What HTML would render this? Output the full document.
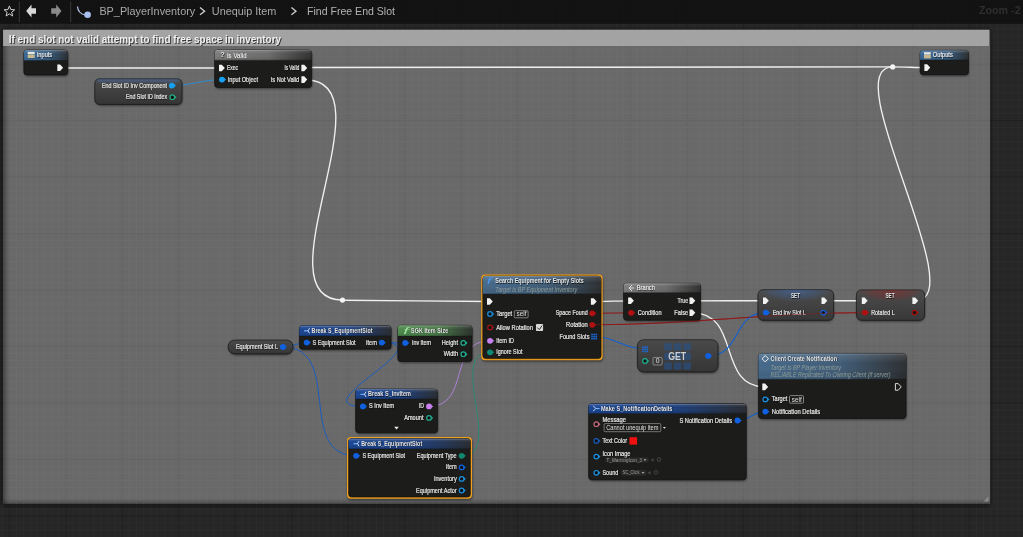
<!DOCTYPE html><html><head><meta charset="utf-8"><style>html,body{margin:0;padding:0;background:#262626;overflow:hidden;width:1023px;height:537px}svg{display:block;font-family:"Liberation Sans",sans-serif}</style></head><body>
<svg width="1023" height="537" viewBox="0 0 1023 537"><g opacity="0.999">
<defs>
<filter id="blur1" x="-20%" y="-20%" width="140%" height="140%"><feGaussianBlur stdDeviation="1.2"/></filter>
<linearGradient id="gloss" x1="0" y1="0" x2="0" y2="1"><stop offset="0" stop-color="#fff" stop-opacity="0.14"/><stop offset="0.4" stop-color="#fff" stop-opacity="0.0"/><stop offset="0.8" stop-color="#000" stop-opacity="0.06"/><stop offset="1" stop-color="#000" stop-opacity="0.02"/></linearGradient>
<linearGradient id="vargrad" x1="0" y1="0" x2="0" y2="1"><stop offset="0" stop-color="#4a4a4a"/><stop offset="1" stop-color="#353535"/></linearGradient>
<linearGradient id="cshade" x1="0" y1="0" x2="1" y2="0"><stop offset="0" stop-color="#000" stop-opacity="0.25"/><stop offset="0.02" stop-color="#000" stop-opacity="0"/></linearGradient>
<radialGradient id="glowb"><stop offset="0" stop-color="#3a72c8" stop-opacity="0.45"/><stop offset="0.65" stop-color="#3a72c8" stop-opacity="0.2"/><stop offset="1" stop-color="#3a72c8" stop-opacity="0"/></radialGradient>
<radialGradient id="glowr"><stop offset="0" stop-color="#a01c1c" stop-opacity="0.45"/><stop offset="0.65" stop-color="#a01c1c" stop-opacity="0.2"/><stop offset="1" stop-color="#a01c1c" stop-opacity="0"/></radialGradient>
<linearGradient id="setgrad" x1="0" y1="0" x2="0" y2="1"><stop offset="0" stop-color="#4c4c4c"/><stop offset="1" stop-color="#383838"/></linearGradient>
<filter id="blur2" x="-5%" y="-5%" width="110%" height="110%"><feGaussianBlur stdDeviation="1.6"/></filter>
<linearGradient id="cshadeL" x1="0" y1="0" x2="1" y2="0"><stop offset="0" stop-color="#000" stop-opacity="0.35"/><stop offset="1" stop-color="#000" stop-opacity="0"/></linearGradient>
<linearGradient id="cshadeR" x1="1" y1="0" x2="0" y2="0"><stop offset="0" stop-color="#000" stop-opacity="0.15"/><stop offset="1" stop-color="#000" stop-opacity="0"/></linearGradient>
<linearGradient id="cshadeB" x1="0" y1="1" x2="0" y2="0"><stop offset="0" stop-color="#000" stop-opacity="0.3"/><stop offset="1" stop-color="#000" stop-opacity="0"/></linearGradient>
</defs>
<rect width="1023" height="537" fill="#262626"/>
<rect x="1.74" y="0.0" width="1" height="537.0" fill="#2c2c2c"/>
<rect x="8.80" y="0.0" width="1" height="537.0" fill="#202020"/>
<rect x="15.86" y="0.0" width="1" height="537.0" fill="#2c2c2c"/>
<rect x="22.92" y="0.0" width="1" height="537.0" fill="#2c2c2c"/>
<rect x="29.98" y="0.0" width="1" height="537.0" fill="#2c2c2c"/>
<rect x="37.03" y="0.0" width="1" height="537.0" fill="#2c2c2c"/>
<rect x="44.09" y="0.0" width="1" height="537.0" fill="#2c2c2c"/>
<rect x="51.15" y="0.0" width="1" height="537.0" fill="#2c2c2c"/>
<rect x="58.21" y="0.0" width="1" height="537.0" fill="#2c2c2c"/>
<rect x="65.27" y="0.0" width="1" height="537.0" fill="#202020"/>
<rect x="72.33" y="0.0" width="1" height="537.0" fill="#2c2c2c"/>
<rect x="79.39" y="0.0" width="1" height="537.0" fill="#2c2c2c"/>
<rect x="86.45" y="0.0" width="1" height="537.0" fill="#2c2c2c"/>
<rect x="93.50" y="0.0" width="1" height="537.0" fill="#2c2c2c"/>
<rect x="100.56" y="0.0" width="1" height="537.0" fill="#2c2c2c"/>
<rect x="107.62" y="0.0" width="1" height="537.0" fill="#2c2c2c"/>
<rect x="114.68" y="0.0" width="1" height="537.0" fill="#2c2c2c"/>
<rect x="121.74" y="0.0" width="1" height="537.0" fill="#202020"/>
<rect x="128.80" y="0.0" width="1" height="537.0" fill="#2c2c2c"/>
<rect x="135.86" y="0.0" width="1" height="537.0" fill="#2c2c2c"/>
<rect x="142.92" y="0.0" width="1" height="537.0" fill="#2c2c2c"/>
<rect x="149.98" y="0.0" width="1" height="537.0" fill="#2c2c2c"/>
<rect x="157.03" y="0.0" width="1" height="537.0" fill="#2c2c2c"/>
<rect x="164.09" y="0.0" width="1" height="537.0" fill="#2c2c2c"/>
<rect x="171.15" y="0.0" width="1" height="537.0" fill="#2c2c2c"/>
<rect x="178.21" y="0.0" width="1" height="537.0" fill="#202020"/>
<rect x="185.27" y="0.0" width="1" height="537.0" fill="#2c2c2c"/>
<rect x="192.33" y="0.0" width="1" height="537.0" fill="#2c2c2c"/>
<rect x="199.39" y="0.0" width="1" height="537.0" fill="#2c2c2c"/>
<rect x="206.44" y="0.0" width="1" height="537.0" fill="#2c2c2c"/>
<rect x="213.50" y="0.0" width="1" height="537.0" fill="#2c2c2c"/>
<rect x="220.56" y="0.0" width="1" height="537.0" fill="#2c2c2c"/>
<rect x="227.62" y="0.0" width="1" height="537.0" fill="#2c2c2c"/>
<rect x="234.68" y="0.0" width="1" height="537.0" fill="#202020"/>
<rect x="241.74" y="0.0" width="1" height="537.0" fill="#2c2c2c"/>
<rect x="248.80" y="0.0" width="1" height="537.0" fill="#2c2c2c"/>
<rect x="255.86" y="0.0" width="1" height="537.0" fill="#2c2c2c"/>
<rect x="262.92" y="0.0" width="1" height="537.0" fill="#2c2c2c"/>
<rect x="269.97" y="0.0" width="1" height="537.0" fill="#2c2c2c"/>
<rect x="277.03" y="0.0" width="1" height="537.0" fill="#2c2c2c"/>
<rect x="284.09" y="0.0" width="1" height="537.0" fill="#2c2c2c"/>
<rect x="291.15" y="0.0" width="1" height="537.0" fill="#202020"/>
<rect x="298.21" y="0.0" width="1" height="537.0" fill="#2c2c2c"/>
<rect x="305.27" y="0.0" width="1" height="537.0" fill="#2c2c2c"/>
<rect x="312.33" y="0.0" width="1" height="537.0" fill="#2c2c2c"/>
<rect x="319.38" y="0.0" width="1" height="537.0" fill="#2c2c2c"/>
<rect x="326.44" y="0.0" width="1" height="537.0" fill="#2c2c2c"/>
<rect x="333.50" y="0.0" width="1" height="537.0" fill="#2c2c2c"/>
<rect x="340.56" y="0.0" width="1" height="537.0" fill="#2c2c2c"/>
<rect x="347.62" y="0.0" width="1" height="537.0" fill="#202020"/>
<rect x="354.68" y="0.0" width="1" height="537.0" fill="#2c2c2c"/>
<rect x="361.74" y="0.0" width="1" height="537.0" fill="#2c2c2c"/>
<rect x="368.80" y="0.0" width="1" height="537.0" fill="#2c2c2c"/>
<rect x="375.86" y="0.0" width="1" height="537.0" fill="#2c2c2c"/>
<rect x="382.91" y="0.0" width="1" height="537.0" fill="#2c2c2c"/>
<rect x="389.97" y="0.0" width="1" height="537.0" fill="#2c2c2c"/>
<rect x="397.03" y="0.0" width="1" height="537.0" fill="#2c2c2c"/>
<rect x="404.09" y="0.0" width="1" height="537.0" fill="#202020"/>
<rect x="411.15" y="0.0" width="1" height="537.0" fill="#2c2c2c"/>
<rect x="418.21" y="0.0" width="1" height="537.0" fill="#2c2c2c"/>
<rect x="425.27" y="0.0" width="1" height="537.0" fill="#2c2c2c"/>
<rect x="432.32" y="0.0" width="1" height="537.0" fill="#2c2c2c"/>
<rect x="439.38" y="0.0" width="1" height="537.0" fill="#2c2c2c"/>
<rect x="446.44" y="0.0" width="1" height="537.0" fill="#2c2c2c"/>
<rect x="453.50" y="0.0" width="1" height="537.0" fill="#2c2c2c"/>
<rect x="460.56" y="0.0" width="1" height="537.0" fill="#202020"/>
<rect x="467.62" y="0.0" width="1" height="537.0" fill="#2c2c2c"/>
<rect x="474.68" y="0.0" width="1" height="537.0" fill="#2c2c2c"/>
<rect x="481.74" y="0.0" width="1" height="537.0" fill="#2c2c2c"/>
<rect x="488.80" y="0.0" width="1" height="537.0" fill="#2c2c2c"/>
<rect x="495.85" y="0.0" width="1" height="537.0" fill="#2c2c2c"/>
<rect x="502.91" y="0.0" width="1" height="537.0" fill="#2c2c2c"/>
<rect x="509.97" y="0.0" width="1" height="537.0" fill="#2c2c2c"/>
<rect x="517.03" y="0.0" width="1" height="537.0" fill="#202020"/>
<rect x="524.09" y="0.0" width="1" height="537.0" fill="#2c2c2c"/>
<rect x="531.15" y="0.0" width="1" height="537.0" fill="#2c2c2c"/>
<rect x="538.21" y="0.0" width="1" height="537.0" fill="#2c2c2c"/>
<rect x="545.26" y="0.0" width="1" height="537.0" fill="#2c2c2c"/>
<rect x="552.32" y="0.0" width="1" height="537.0" fill="#2c2c2c"/>
<rect x="559.38" y="0.0" width="1" height="537.0" fill="#2c2c2c"/>
<rect x="566.44" y="0.0" width="1" height="537.0" fill="#2c2c2c"/>
<rect x="573.50" y="0.0" width="1" height="537.0" fill="#202020"/>
<rect x="580.56" y="0.0" width="1" height="537.0" fill="#2c2c2c"/>
<rect x="587.62" y="0.0" width="1" height="537.0" fill="#2c2c2c"/>
<rect x="594.68" y="0.0" width="1" height="537.0" fill="#2c2c2c"/>
<rect x="601.73" y="0.0" width="1" height="537.0" fill="#2c2c2c"/>
<rect x="608.79" y="0.0" width="1" height="537.0" fill="#2c2c2c"/>
<rect x="615.85" y="0.0" width="1" height="537.0" fill="#2c2c2c"/>
<rect x="622.91" y="0.0" width="1" height="537.0" fill="#2c2c2c"/>
<rect x="629.97" y="0.0" width="1" height="537.0" fill="#202020"/>
<rect x="637.03" y="0.0" width="1" height="537.0" fill="#2c2c2c"/>
<rect x="644.09" y="0.0" width="1" height="537.0" fill="#2c2c2c"/>
<rect x="651.15" y="0.0" width="1" height="537.0" fill="#2c2c2c"/>
<rect x="658.20" y="0.0" width="1" height="537.0" fill="#2c2c2c"/>
<rect x="665.26" y="0.0" width="1" height="537.0" fill="#2c2c2c"/>
<rect x="672.32" y="0.0" width="1" height="537.0" fill="#2c2c2c"/>
<rect x="679.38" y="0.0" width="1" height="537.0" fill="#2c2c2c"/>
<rect x="686.44" y="0.0" width="1" height="537.0" fill="#202020"/>
<rect x="693.50" y="0.0" width="1" height="537.0" fill="#2c2c2c"/>
<rect x="700.56" y="0.0" width="1" height="537.0" fill="#2c2c2c"/>
<rect x="707.62" y="0.0" width="1" height="537.0" fill="#2c2c2c"/>
<rect x="714.67" y="0.0" width="1" height="537.0" fill="#2c2c2c"/>
<rect x="721.73" y="0.0" width="1" height="537.0" fill="#2c2c2c"/>
<rect x="728.79" y="0.0" width="1" height="537.0" fill="#2c2c2c"/>
<rect x="735.85" y="0.0" width="1" height="537.0" fill="#2c2c2c"/>
<rect x="742.91" y="0.0" width="1" height="537.0" fill="#202020"/>
<rect x="749.97" y="0.0" width="1" height="537.0" fill="#2c2c2c"/>
<rect x="757.03" y="0.0" width="1" height="537.0" fill="#2c2c2c"/>
<rect x="764.09" y="0.0" width="1" height="537.0" fill="#2c2c2c"/>
<rect x="771.14" y="0.0" width="1" height="537.0" fill="#2c2c2c"/>
<rect x="778.20" y="0.0" width="1" height="537.0" fill="#2c2c2c"/>
<rect x="785.26" y="0.0" width="1" height="537.0" fill="#2c2c2c"/>
<rect x="792.32" y="0.0" width="1" height="537.0" fill="#2c2c2c"/>
<rect x="799.38" y="0.0" width="1" height="537.0" fill="#202020"/>
<rect x="806.44" y="0.0" width="1" height="537.0" fill="#2c2c2c"/>
<rect x="813.50" y="0.0" width="1" height="537.0" fill="#2c2c2c"/>
<rect x="820.56" y="0.0" width="1" height="537.0" fill="#2c2c2c"/>
<rect x="827.61" y="0.0" width="1" height="537.0" fill="#2c2c2c"/>
<rect x="834.67" y="0.0" width="1" height="537.0" fill="#2c2c2c"/>
<rect x="841.73" y="0.0" width="1" height="537.0" fill="#2c2c2c"/>
<rect x="848.79" y="0.0" width="1" height="537.0" fill="#2c2c2c"/>
<rect x="855.85" y="0.0" width="1" height="537.0" fill="#202020"/>
<rect x="862.91" y="0.0" width="1" height="537.0" fill="#2c2c2c"/>
<rect x="869.97" y="0.0" width="1" height="537.0" fill="#2c2c2c"/>
<rect x="877.03" y="0.0" width="1" height="537.0" fill="#2c2c2c"/>
<rect x="884.08" y="0.0" width="1" height="537.0" fill="#2c2c2c"/>
<rect x="891.14" y="0.0" width="1" height="537.0" fill="#2c2c2c"/>
<rect x="898.20" y="0.0" width="1" height="537.0" fill="#2c2c2c"/>
<rect x="905.26" y="0.0" width="1" height="537.0" fill="#2c2c2c"/>
<rect x="912.32" y="0.0" width="1" height="537.0" fill="#202020"/>
<rect x="919.38" y="0.0" width="1" height="537.0" fill="#2c2c2c"/>
<rect x="926.44" y="0.0" width="1" height="537.0" fill="#2c2c2c"/>
<rect x="933.50" y="0.0" width="1" height="537.0" fill="#2c2c2c"/>
<rect x="940.55" y="0.0" width="1" height="537.0" fill="#2c2c2c"/>
<rect x="947.61" y="0.0" width="1" height="537.0" fill="#2c2c2c"/>
<rect x="954.67" y="0.0" width="1" height="537.0" fill="#2c2c2c"/>
<rect x="961.73" y="0.0" width="1" height="537.0" fill="#2c2c2c"/>
<rect x="968.79" y="0.0" width="1" height="537.0" fill="#202020"/>
<rect x="975.85" y="0.0" width="1" height="537.0" fill="#2c2c2c"/>
<rect x="982.91" y="0.0" width="1" height="537.0" fill="#2c2c2c"/>
<rect x="989.97" y="0.0" width="1" height="537.0" fill="#2c2c2c"/>
<rect x="997.02" y="0.0" width="1" height="537.0" fill="#2c2c2c"/>
<rect x="1004.08" y="0.0" width="1" height="537.0" fill="#2c2c2c"/>
<rect x="1011.14" y="0.0" width="1" height="537.0" fill="#2c2c2c"/>
<rect x="1018.20" y="0.0" width="1" height="537.0" fill="#2c2c2c"/>
<rect x="0.0" y="0.07" width="1023.0" height="1" fill="#2c2c2c"/>
<rect x="0.0" y="7.13" width="1023.0" height="1" fill="#202020"/>
<rect x="0.0" y="14.19" width="1023.0" height="1" fill="#2c2c2c"/>
<rect x="0.0" y="21.25" width="1023.0" height="1" fill="#2c2c2c"/>
<rect x="0.0" y="28.31" width="1023.0" height="1" fill="#2c2c2c"/>
<rect x="0.0" y="35.36" width="1023.0" height="1" fill="#2c2c2c"/>
<rect x="0.0" y="42.42" width="1023.0" height="1" fill="#2c2c2c"/>
<rect x="0.0" y="49.48" width="1023.0" height="1" fill="#2c2c2c"/>
<rect x="0.0" y="56.54" width="1023.0" height="1" fill="#2c2c2c"/>
<rect x="0.0" y="63.60" width="1023.0" height="1" fill="#202020"/>
<rect x="0.0" y="70.66" width="1023.0" height="1" fill="#2c2c2c"/>
<rect x="0.0" y="77.72" width="1023.0" height="1" fill="#2c2c2c"/>
<rect x="0.0" y="84.78" width="1023.0" height="1" fill="#2c2c2c"/>
<rect x="0.0" y="91.83" width="1023.0" height="1" fill="#2c2c2c"/>
<rect x="0.0" y="98.89" width="1023.0" height="1" fill="#2c2c2c"/>
<rect x="0.0" y="105.95" width="1023.0" height="1" fill="#2c2c2c"/>
<rect x="0.0" y="113.01" width="1023.0" height="1" fill="#2c2c2c"/>
<rect x="0.0" y="120.07" width="1023.0" height="1" fill="#202020"/>
<rect x="0.0" y="127.13" width="1023.0" height="1" fill="#2c2c2c"/>
<rect x="0.0" y="134.19" width="1023.0" height="1" fill="#2c2c2c"/>
<rect x="0.0" y="141.25" width="1023.0" height="1" fill="#2c2c2c"/>
<rect x="0.0" y="148.31" width="1023.0" height="1" fill="#2c2c2c"/>
<rect x="0.0" y="155.36" width="1023.0" height="1" fill="#2c2c2c"/>
<rect x="0.0" y="162.42" width="1023.0" height="1" fill="#2c2c2c"/>
<rect x="0.0" y="169.48" width="1023.0" height="1" fill="#2c2c2c"/>
<rect x="0.0" y="176.54" width="1023.0" height="1" fill="#202020"/>
<rect x="0.0" y="183.60" width="1023.0" height="1" fill="#2c2c2c"/>
<rect x="0.0" y="190.66" width="1023.0" height="1" fill="#2c2c2c"/>
<rect x="0.0" y="197.72" width="1023.0" height="1" fill="#2c2c2c"/>
<rect x="0.0" y="204.78" width="1023.0" height="1" fill="#2c2c2c"/>
<rect x="0.0" y="211.83" width="1023.0" height="1" fill="#2c2c2c"/>
<rect x="0.0" y="218.89" width="1023.0" height="1" fill="#2c2c2c"/>
<rect x="0.0" y="225.95" width="1023.0" height="1" fill="#2c2c2c"/>
<rect x="0.0" y="233.01" width="1023.0" height="1" fill="#202020"/>
<rect x="0.0" y="240.07" width="1023.0" height="1" fill="#2c2c2c"/>
<rect x="0.0" y="247.13" width="1023.0" height="1" fill="#2c2c2c"/>
<rect x="0.0" y="254.19" width="1023.0" height="1" fill="#2c2c2c"/>
<rect x="0.0" y="261.25" width="1023.0" height="1" fill="#2c2c2c"/>
<rect x="0.0" y="268.30" width="1023.0" height="1" fill="#2c2c2c"/>
<rect x="0.0" y="275.36" width="1023.0" height="1" fill="#2c2c2c"/>
<rect x="0.0" y="282.42" width="1023.0" height="1" fill="#2c2c2c"/>
<rect x="0.0" y="289.48" width="1023.0" height="1" fill="#202020"/>
<rect x="0.0" y="296.54" width="1023.0" height="1" fill="#2c2c2c"/>
<rect x="0.0" y="303.60" width="1023.0" height="1" fill="#2c2c2c"/>
<rect x="0.0" y="310.66" width="1023.0" height="1" fill="#2c2c2c"/>
<rect x="0.0" y="317.72" width="1023.0" height="1" fill="#2c2c2c"/>
<rect x="0.0" y="324.77" width="1023.0" height="1" fill="#2c2c2c"/>
<rect x="0.0" y="331.83" width="1023.0" height="1" fill="#2c2c2c"/>
<rect x="0.0" y="338.89" width="1023.0" height="1" fill="#2c2c2c"/>
<rect x="0.0" y="345.95" width="1023.0" height="1" fill="#202020"/>
<rect x="0.0" y="353.01" width="1023.0" height="1" fill="#2c2c2c"/>
<rect x="0.0" y="360.07" width="1023.0" height="1" fill="#2c2c2c"/>
<rect x="0.0" y="367.13" width="1023.0" height="1" fill="#2c2c2c"/>
<rect x="0.0" y="374.18" width="1023.0" height="1" fill="#2c2c2c"/>
<rect x="0.0" y="381.24" width="1023.0" height="1" fill="#2c2c2c"/>
<rect x="0.0" y="388.30" width="1023.0" height="1" fill="#2c2c2c"/>
<rect x="0.0" y="395.36" width="1023.0" height="1" fill="#2c2c2c"/>
<rect x="0.0" y="402.42" width="1023.0" height="1" fill="#202020"/>
<rect x="0.0" y="409.48" width="1023.0" height="1" fill="#2c2c2c"/>
<rect x="0.0" y="416.54" width="1023.0" height="1" fill="#2c2c2c"/>
<rect x="0.0" y="423.60" width="1023.0" height="1" fill="#2c2c2c"/>
<rect x="0.0" y="430.65" width="1023.0" height="1" fill="#2c2c2c"/>
<rect x="0.0" y="437.71" width="1023.0" height="1" fill="#2c2c2c"/>
<rect x="0.0" y="444.77" width="1023.0" height="1" fill="#2c2c2c"/>
<rect x="0.0" y="451.83" width="1023.0" height="1" fill="#2c2c2c"/>
<rect x="0.0" y="458.89" width="1023.0" height="1" fill="#202020"/>
<rect x="0.0" y="465.95" width="1023.0" height="1" fill="#2c2c2c"/>
<rect x="0.0" y="473.01" width="1023.0" height="1" fill="#2c2c2c"/>
<rect x="0.0" y="480.07" width="1023.0" height="1" fill="#2c2c2c"/>
<rect x="0.0" y="487.12" width="1023.0" height="1" fill="#2c2c2c"/>
<rect x="0.0" y="494.18" width="1023.0" height="1" fill="#2c2c2c"/>
<rect x="0.0" y="501.24" width="1023.0" height="1" fill="#2c2c2c"/>
<rect x="0.0" y="508.30" width="1023.0" height="1" fill="#2c2c2c"/>
<rect x="0.0" y="515.36" width="1023.0" height="1" fill="#202020"/>
<rect x="0.0" y="522.42" width="1023.0" height="1" fill="#2c2c2c"/>
<rect x="0.0" y="529.48" width="1023.0" height="1" fill="#2c2c2c"/>
<rect x="0" y="0" width="1023" height="23.8" fill="#111111" fill-opacity="0.9"/>
<rect x="1.6" y="29.3" width="988.9" height="477.0" rx="2" fill="#141414" fill-opacity="0.7" filter="url(#blur2)"/>
<rect x="3.1" y="29.8" width="986.9" height="474.0" fill="#696969"/>
<rect x="8.80" y="46.0" width="1" height="457.8" fill="#646464"/>
<rect x="15.86" y="46.0" width="1" height="457.8" fill="#6d6d6d"/>
<rect x="22.92" y="46.0" width="1" height="457.8" fill="#6d6d6d"/>
<rect x="29.98" y="46.0" width="1" height="457.8" fill="#6d6d6d"/>
<rect x="37.03" y="46.0" width="1" height="457.8" fill="#6d6d6d"/>
<rect x="44.09" y="46.0" width="1" height="457.8" fill="#6d6d6d"/>
<rect x="51.15" y="46.0" width="1" height="457.8" fill="#6d6d6d"/>
<rect x="58.21" y="46.0" width="1" height="457.8" fill="#6d6d6d"/>
<rect x="65.27" y="46.0" width="1" height="457.8" fill="#646464"/>
<rect x="72.33" y="46.0" width="1" height="457.8" fill="#6d6d6d"/>
<rect x="79.39" y="46.0" width="1" height="457.8" fill="#6d6d6d"/>
<rect x="86.45" y="46.0" width="1" height="457.8" fill="#6d6d6d"/>
<rect x="93.50" y="46.0" width="1" height="457.8" fill="#6d6d6d"/>
<rect x="100.56" y="46.0" width="1" height="457.8" fill="#6d6d6d"/>
<rect x="107.62" y="46.0" width="1" height="457.8" fill="#6d6d6d"/>
<rect x="114.68" y="46.0" width="1" height="457.8" fill="#6d6d6d"/>
<rect x="121.74" y="46.0" width="1" height="457.8" fill="#646464"/>
<rect x="128.80" y="46.0" width="1" height="457.8" fill="#6d6d6d"/>
<rect x="135.86" y="46.0" width="1" height="457.8" fill="#6d6d6d"/>
<rect x="142.92" y="46.0" width="1" height="457.8" fill="#6d6d6d"/>
<rect x="149.98" y="46.0" width="1" height="457.8" fill="#6d6d6d"/>
<rect x="157.03" y="46.0" width="1" height="457.8" fill="#6d6d6d"/>
<rect x="164.09" y="46.0" width="1" height="457.8" fill="#6d6d6d"/>
<rect x="171.15" y="46.0" width="1" height="457.8" fill="#6d6d6d"/>
<rect x="178.21" y="46.0" width="1" height="457.8" fill="#646464"/>
<rect x="185.27" y="46.0" width="1" height="457.8" fill="#6d6d6d"/>
<rect x="192.33" y="46.0" width="1" height="457.8" fill="#6d6d6d"/>
<rect x="199.39" y="46.0" width="1" height="457.8" fill="#6d6d6d"/>
<rect x="206.44" y="46.0" width="1" height="457.8" fill="#6d6d6d"/>
<rect x="213.50" y="46.0" width="1" height="457.8" fill="#6d6d6d"/>
<rect x="220.56" y="46.0" width="1" height="457.8" fill="#6d6d6d"/>
<rect x="227.62" y="46.0" width="1" height="457.8" fill="#6d6d6d"/>
<rect x="234.68" y="46.0" width="1" height="457.8" fill="#646464"/>
<rect x="241.74" y="46.0" width="1" height="457.8" fill="#6d6d6d"/>
<rect x="248.80" y="46.0" width="1" height="457.8" fill="#6d6d6d"/>
<rect x="255.86" y="46.0" width="1" height="457.8" fill="#6d6d6d"/>
<rect x="262.92" y="46.0" width="1" height="457.8" fill="#6d6d6d"/>
<rect x="269.97" y="46.0" width="1" height="457.8" fill="#6d6d6d"/>
<rect x="277.03" y="46.0" width="1" height="457.8" fill="#6d6d6d"/>
<rect x="284.09" y="46.0" width="1" height="457.8" fill="#6d6d6d"/>
<rect x="291.15" y="46.0" width="1" height="457.8" fill="#646464"/>
<rect x="298.21" y="46.0" width="1" height="457.8" fill="#6d6d6d"/>
<rect x="305.27" y="46.0" width="1" height="457.8" fill="#6d6d6d"/>
<rect x="312.33" y="46.0" width="1" height="457.8" fill="#6d6d6d"/>
<rect x="319.38" y="46.0" width="1" height="457.8" fill="#6d6d6d"/>
<rect x="326.44" y="46.0" width="1" height="457.8" fill="#6d6d6d"/>
<rect x="333.50" y="46.0" width="1" height="457.8" fill="#6d6d6d"/>
<rect x="340.56" y="46.0" width="1" height="457.8" fill="#6d6d6d"/>
<rect x="347.62" y="46.0" width="1" height="457.8" fill="#646464"/>
<rect x="354.68" y="46.0" width="1" height="457.8" fill="#6d6d6d"/>
<rect x="361.74" y="46.0" width="1" height="457.8" fill="#6d6d6d"/>
<rect x="368.80" y="46.0" width="1" height="457.8" fill="#6d6d6d"/>
<rect x="375.86" y="46.0" width="1" height="457.8" fill="#6d6d6d"/>
<rect x="382.91" y="46.0" width="1" height="457.8" fill="#6d6d6d"/>
<rect x="389.97" y="46.0" width="1" height="457.8" fill="#6d6d6d"/>
<rect x="397.03" y="46.0" width="1" height="457.8" fill="#6d6d6d"/>
<rect x="404.09" y="46.0" width="1" height="457.8" fill="#646464"/>
<rect x="411.15" y="46.0" width="1" height="457.8" fill="#6d6d6d"/>
<rect x="418.21" y="46.0" width="1" height="457.8" fill="#6d6d6d"/>
<rect x="425.27" y="46.0" width="1" height="457.8" fill="#6d6d6d"/>
<rect x="432.32" y="46.0" width="1" height="457.8" fill="#6d6d6d"/>
<rect x="439.38" y="46.0" width="1" height="457.8" fill="#6d6d6d"/>
<rect x="446.44" y="46.0" width="1" height="457.8" fill="#6d6d6d"/>
<rect x="453.50" y="46.0" width="1" height="457.8" fill="#6d6d6d"/>
<rect x="460.56" y="46.0" width="1" height="457.8" fill="#646464"/>
<rect x="467.62" y="46.0" width="1" height="457.8" fill="#6d6d6d"/>
<rect x="474.68" y="46.0" width="1" height="457.8" fill="#6d6d6d"/>
<rect x="481.74" y="46.0" width="1" height="457.8" fill="#6d6d6d"/>
<rect x="488.80" y="46.0" width="1" height="457.8" fill="#6d6d6d"/>
<rect x="495.85" y="46.0" width="1" height="457.8" fill="#6d6d6d"/>
<rect x="502.91" y="46.0" width="1" height="457.8" fill="#6d6d6d"/>
<rect x="509.97" y="46.0" width="1" height="457.8" fill="#6d6d6d"/>
<rect x="517.03" y="46.0" width="1" height="457.8" fill="#646464"/>
<rect x="524.09" y="46.0" width="1" height="457.8" fill="#6d6d6d"/>
<rect x="531.15" y="46.0" width="1" height="457.8" fill="#6d6d6d"/>
<rect x="538.21" y="46.0" width="1" height="457.8" fill="#6d6d6d"/>
<rect x="545.26" y="46.0" width="1" height="457.8" fill="#6d6d6d"/>
<rect x="552.32" y="46.0" width="1" height="457.8" fill="#6d6d6d"/>
<rect x="559.38" y="46.0" width="1" height="457.8" fill="#6d6d6d"/>
<rect x="566.44" y="46.0" width="1" height="457.8" fill="#6d6d6d"/>
<rect x="573.50" y="46.0" width="1" height="457.8" fill="#646464"/>
<rect x="580.56" y="46.0" width="1" height="457.8" fill="#6d6d6d"/>
<rect x="587.62" y="46.0" width="1" height="457.8" fill="#6d6d6d"/>
<rect x="594.68" y="46.0" width="1" height="457.8" fill="#6d6d6d"/>
<rect x="601.73" y="46.0" width="1" height="457.8" fill="#6d6d6d"/>
<rect x="608.79" y="46.0" width="1" height="457.8" fill="#6d6d6d"/>
<rect x="615.85" y="46.0" width="1" height="457.8" fill="#6d6d6d"/>
<rect x="622.91" y="46.0" width="1" height="457.8" fill="#6d6d6d"/>
<rect x="629.97" y="46.0" width="1" height="457.8" fill="#646464"/>
<rect x="637.03" y="46.0" width="1" height="457.8" fill="#6d6d6d"/>
<rect x="644.09" y="46.0" width="1" height="457.8" fill="#6d6d6d"/>
<rect x="651.15" y="46.0" width="1" height="457.8" fill="#6d6d6d"/>
<rect x="658.20" y="46.0" width="1" height="457.8" fill="#6d6d6d"/>
<rect x="665.26" y="46.0" width="1" height="457.8" fill="#6d6d6d"/>
<rect x="672.32" y="46.0" width="1" height="457.8" fill="#6d6d6d"/>
<rect x="679.38" y="46.0" width="1" height="457.8" fill="#6d6d6d"/>
<rect x="686.44" y="46.0" width="1" height="457.8" fill="#646464"/>
<rect x="693.50" y="46.0" width="1" height="457.8" fill="#6d6d6d"/>
<rect x="700.56" y="46.0" width="1" height="457.8" fill="#6d6d6d"/>
<rect x="707.62" y="46.0" width="1" height="457.8" fill="#6d6d6d"/>
<rect x="714.67" y="46.0" width="1" height="457.8" fill="#6d6d6d"/>
<rect x="721.73" y="46.0" width="1" height="457.8" fill="#6d6d6d"/>
<rect x="728.79" y="46.0" width="1" height="457.8" fill="#6d6d6d"/>
<rect x="735.85" y="46.0" width="1" height="457.8" fill="#6d6d6d"/>
<rect x="742.91" y="46.0" width="1" height="457.8" fill="#646464"/>
<rect x="749.97" y="46.0" width="1" height="457.8" fill="#6d6d6d"/>
<rect x="757.03" y="46.0" width="1" height="457.8" fill="#6d6d6d"/>
<rect x="764.09" y="46.0" width="1" height="457.8" fill="#6d6d6d"/>
<rect x="771.14" y="46.0" width="1" height="457.8" fill="#6d6d6d"/>
<rect x="778.20" y="46.0" width="1" height="457.8" fill="#6d6d6d"/>
<rect x="785.26" y="46.0" width="1" height="457.8" fill="#6d6d6d"/>
<rect x="792.32" y="46.0" width="1" height="457.8" fill="#6d6d6d"/>
<rect x="799.38" y="46.0" width="1" height="457.8" fill="#646464"/>
<rect x="806.44" y="46.0" width="1" height="457.8" fill="#6d6d6d"/>
<rect x="813.50" y="46.0" width="1" height="457.8" fill="#6d6d6d"/>
<rect x="820.56" y="46.0" width="1" height="457.8" fill="#6d6d6d"/>
<rect x="827.61" y="46.0" width="1" height="457.8" fill="#6d6d6d"/>
<rect x="834.67" y="46.0" width="1" height="457.8" fill="#6d6d6d"/>
<rect x="841.73" y="46.0" width="1" height="457.8" fill="#6d6d6d"/>
<rect x="848.79" y="46.0" width="1" height="457.8" fill="#6d6d6d"/>
<rect x="855.85" y="46.0" width="1" height="457.8" fill="#646464"/>
<rect x="862.91" y="46.0" width="1" height="457.8" fill="#6d6d6d"/>
<rect x="869.97" y="46.0" width="1" height="457.8" fill="#6d6d6d"/>
<rect x="877.03" y="46.0" width="1" height="457.8" fill="#6d6d6d"/>
<rect x="884.08" y="46.0" width="1" height="457.8" fill="#6d6d6d"/>
<rect x="891.14" y="46.0" width="1" height="457.8" fill="#6d6d6d"/>
<rect x="898.20" y="46.0" width="1" height="457.8" fill="#6d6d6d"/>
<rect x="905.26" y="46.0" width="1" height="457.8" fill="#6d6d6d"/>
<rect x="912.32" y="46.0" width="1" height="457.8" fill="#646464"/>
<rect x="919.38" y="46.0" width="1" height="457.8" fill="#6d6d6d"/>
<rect x="926.44" y="46.0" width="1" height="457.8" fill="#6d6d6d"/>
<rect x="933.50" y="46.0" width="1" height="457.8" fill="#6d6d6d"/>
<rect x="940.55" y="46.0" width="1" height="457.8" fill="#6d6d6d"/>
<rect x="947.61" y="46.0" width="1" height="457.8" fill="#6d6d6d"/>
<rect x="954.67" y="46.0" width="1" height="457.8" fill="#6d6d6d"/>
<rect x="961.73" y="46.0" width="1" height="457.8" fill="#6d6d6d"/>
<rect x="968.79" y="46.0" width="1" height="457.8" fill="#646464"/>
<rect x="975.85" y="46.0" width="1" height="457.8" fill="#6d6d6d"/>
<rect x="982.91" y="46.0" width="1" height="457.8" fill="#6d6d6d"/>
<rect x="3.1" y="49.48" width="986.9" height="1" fill="#6d6d6d"/>
<rect x="3.1" y="56.54" width="986.9" height="1" fill="#6d6d6d"/>
<rect x="3.1" y="63.60" width="986.9" height="1" fill="#646464"/>
<rect x="3.1" y="70.66" width="986.9" height="1" fill="#6d6d6d"/>
<rect x="3.1" y="77.72" width="986.9" height="1" fill="#6d6d6d"/>
<rect x="3.1" y="84.78" width="986.9" height="1" fill="#6d6d6d"/>
<rect x="3.1" y="91.83" width="986.9" height="1" fill="#6d6d6d"/>
<rect x="3.1" y="98.89" width="986.9" height="1" fill="#6d6d6d"/>
<rect x="3.1" y="105.95" width="986.9" height="1" fill="#6d6d6d"/>
<rect x="3.1" y="113.01" width="986.9" height="1" fill="#6d6d6d"/>
<rect x="3.1" y="120.07" width="986.9" height="1" fill="#646464"/>
<rect x="3.1" y="127.13" width="986.9" height="1" fill="#6d6d6d"/>
<rect x="3.1" y="134.19" width="986.9" height="1" fill="#6d6d6d"/>
<rect x="3.1" y="141.25" width="986.9" height="1" fill="#6d6d6d"/>
<rect x="3.1" y="148.31" width="986.9" height="1" fill="#6d6d6d"/>
<rect x="3.1" y="155.36" width="986.9" height="1" fill="#6d6d6d"/>
<rect x="3.1" y="162.42" width="986.9" height="1" fill="#6d6d6d"/>
<rect x="3.1" y="169.48" width="986.9" height="1" fill="#6d6d6d"/>
<rect x="3.1" y="176.54" width="986.9" height="1" fill="#646464"/>
<rect x="3.1" y="183.60" width="986.9" height="1" fill="#6d6d6d"/>
<rect x="3.1" y="190.66" width="986.9" height="1" fill="#6d6d6d"/>
<rect x="3.1" y="197.72" width="986.9" height="1" fill="#6d6d6d"/>
<rect x="3.1" y="204.78" width="986.9" height="1" fill="#6d6d6d"/>
<rect x="3.1" y="211.83" width="986.9" height="1" fill="#6d6d6d"/>
<rect x="3.1" y="218.89" width="986.9" height="1" fill="#6d6d6d"/>
<rect x="3.1" y="225.95" width="986.9" height="1" fill="#6d6d6d"/>
<rect x="3.1" y="233.01" width="986.9" height="1" fill="#646464"/>
<rect x="3.1" y="240.07" width="986.9" height="1" fill="#6d6d6d"/>
<rect x="3.1" y="247.13" width="986.9" height="1" fill="#6d6d6d"/>
<rect x="3.1" y="254.19" width="986.9" height="1" fill="#6d6d6d"/>
<rect x="3.1" y="261.25" width="986.9" height="1" fill="#6d6d6d"/>
<rect x="3.1" y="268.30" width="986.9" height="1" fill="#6d6d6d"/>
<rect x="3.1" y="275.36" width="986.9" height="1" fill="#6d6d6d"/>
<rect x="3.1" y="282.42" width="986.9" height="1" fill="#6d6d6d"/>
<rect x="3.1" y="289.48" width="986.9" height="1" fill="#646464"/>
<rect x="3.1" y="296.54" width="986.9" height="1" fill="#6d6d6d"/>
<rect x="3.1" y="303.60" width="986.9" height="1" fill="#6d6d6d"/>
<rect x="3.1" y="310.66" width="986.9" height="1" fill="#6d6d6d"/>
<rect x="3.1" y="317.72" width="986.9" height="1" fill="#6d6d6d"/>
<rect x="3.1" y="324.77" width="986.9" height="1" fill="#6d6d6d"/>
<rect x="3.1" y="331.83" width="986.9" height="1" fill="#6d6d6d"/>
<rect x="3.1" y="338.89" width="986.9" height="1" fill="#6d6d6d"/>
<rect x="3.1" y="345.95" width="986.9" height="1" fill="#646464"/>
<rect x="3.1" y="353.01" width="986.9" height="1" fill="#6d6d6d"/>
<rect x="3.1" y="360.07" width="986.9" height="1" fill="#6d6d6d"/>
<rect x="3.1" y="367.13" width="986.9" height="1" fill="#6d6d6d"/>
<rect x="3.1" y="374.18" width="986.9" height="1" fill="#6d6d6d"/>
<rect x="3.1" y="381.24" width="986.9" height="1" fill="#6d6d6d"/>
<rect x="3.1" y="388.30" width="986.9" height="1" fill="#6d6d6d"/>
<rect x="3.1" y="395.36" width="986.9" height="1" fill="#6d6d6d"/>
<rect x="3.1" y="402.42" width="986.9" height="1" fill="#646464"/>
<rect x="3.1" y="409.48" width="986.9" height="1" fill="#6d6d6d"/>
<rect x="3.1" y="416.54" width="986.9" height="1" fill="#6d6d6d"/>
<rect x="3.1" y="423.60" width="986.9" height="1" fill="#6d6d6d"/>
<rect x="3.1" y="430.65" width="986.9" height="1" fill="#6d6d6d"/>
<rect x="3.1" y="437.71" width="986.9" height="1" fill="#6d6d6d"/>
<rect x="3.1" y="444.77" width="986.9" height="1" fill="#6d6d6d"/>
<rect x="3.1" y="451.83" width="986.9" height="1" fill="#6d6d6d"/>
<rect x="3.1" y="458.89" width="986.9" height="1" fill="#646464"/>
<rect x="3.1" y="465.95" width="986.9" height="1" fill="#6d6d6d"/>
<rect x="3.1" y="473.01" width="986.9" height="1" fill="#6d6d6d"/>
<rect x="3.1" y="480.07" width="986.9" height="1" fill="#6d6d6d"/>
<rect x="3.1" y="487.12" width="986.9" height="1" fill="#6d6d6d"/>
<rect x="3.1" y="494.18" width="986.9" height="1" fill="#6d6d6d"/>
<rect x="3.1" y="501.24" width="986.9" height="1" fill="#6d6d6d"/>
<rect x="3.1" y="29.8" width="6" height="474.0" fill="url(#cshadeL)"/>
<rect x="3.1" y="498.8" width="986.9" height="5" fill="url(#cshadeB)"/>
<rect x="3.1" y="29.8" width="985.9" height="16.2" fill="#a3a3a3"/>
<text x="9.8" y="43.6" font-size="11.2" font-weight="bold" font-style="normal" text-anchor="start" fill="#2a2a2a" textLength="272.2" lengthAdjust="spacingAndGlyphs" fill-opacity="0.9">If end slot not valid attempt to find free space in inventory</text>
<text x="8.8" y="42.6" font-size="11.2" font-weight="bold" font-style="normal" text-anchor="start" fill="#f0f0f0" textLength="272.2" lengthAdjust="spacingAndGlyphs">If end slot not valid attempt to find free space in inventory</text>
<path d="M983.5,501.5 L988.5,496.5 L988.5,501.5 Z" fill="#9a9a9a" fill-opacity="0.7"/>
<polygon points="9.40,5.90 10.81,9.56 14.73,9.77 11.68,12.24 12.69,16.03 9.40,13.90 6.11,16.03 7.12,12.24 4.07,9.77 7.99,9.56" fill="none" stroke="#cfcfcf" stroke-width="1"/>
<rect x="18.8" y="1.5" width="1" height="20.5" fill="#3a3a3a"/>
<rect x="70.2" y="1.5" width="1" height="20.5" fill="#3a3a3a"/>
<polygon points="26.2,11 31.5,4.6 31.5,8.3 36,8.3 36,13.7 31.5,13.7 31.5,17.4" fill="#d8d8d8"/>
<polygon points="61.5,11 56.2,4.6 56.2,8.3 51.2,8.3 51.2,13.7 56.2,13.7 56.2,17.4" fill="#8a8a8a"/>
<path d="M77.5,6.5 C77.8,11 80.5,14 85,15" fill="none" stroke="#b8c8f0" stroke-width="1.2"/>
<circle cx="87.6" cy="14.8" r="3.3" fill="#a8bff0"/>
<text x="99.4" y="15.1" font-size="11.2" font-weight="normal" font-style="normal" text-anchor="start" fill="#a9a9a9" textLength="95.8" lengthAdjust="spacingAndGlyphs">BP_PlayerInventory</text>
<path d="M200,7.6 L204.6,11.2 L200,14.8" fill="none" stroke="#d0d0d0" stroke-width="1.3"/>
<text x="211.8" y="15.1" font-size="11.2" font-weight="normal" font-style="normal" text-anchor="start" fill="#a9a9a9" textLength="64.6" lengthAdjust="spacingAndGlyphs">Unequip Item</text>
<path d="M291.4,7.6 L296,11.2 L291.4,14.8" fill="none" stroke="#d0d0d0" stroke-width="1.3"/>
<text x="307.0" y="15.1" font-size="11.2" font-weight="normal" font-style="normal" text-anchor="start" fill="#b4b4b4" textLength="88.0" lengthAdjust="spacingAndGlyphs">Find Free End Slot</text>
<text x="979.0" y="13.7" font-size="11.5" font-weight="bold" font-style="normal" text-anchor="start" fill="#2f2f2f" textLength="41.6" lengthAdjust="spacingAndGlyphs">Zoom -2</text>
<path d="M63.0,68.0 C115.0,68.0 167.0,68.0 219.0,68.0" fill="none" stroke="#f0f0f0" stroke-width="1.35" stroke-opacity="1.0"/>
<path d="M306.0,67.5 C501.8,67.5 696.9,66.9 892.7,66.9" fill="none" stroke="#f0f0f0" stroke-width="1.35" stroke-opacity="1.0"/>
<path d="M892.7,66.9 C904.5,66.9 915.6,67.6 927.4,67.6" fill="none" stroke="#f0f0f0" stroke-width="1.35" stroke-opacity="1.0"/>
<path d="M306.0,80.0 C391.5,80.0 257.0,300.0 342.5,300.0" fill="none" stroke="#f0f0f0" stroke-width="1.35" stroke-opacity="1.0"/>
<path d="M342.5,300.2 C392.1,300.2 440.4,301.5 490.0,301.5" fill="none" stroke="#f0f0f0" stroke-width="1.35" stroke-opacity="1.0"/>
<path d="M594.0,301.5 C606.6,301.5 618.4,300.8 631.0,300.8" fill="none" stroke="#f0f0f0" stroke-width="1.35" stroke-opacity="1.0"/>
<path d="M692.5,300.8 C717.0,300.8 741.5,300.7 766.0,300.7" fill="none" stroke="#f0f0f0" stroke-width="1.35" stroke-opacity="1.0"/>
<path d="M824.5,300.7 C837.9,300.7 851.4,300.7 864.8,300.7" fill="none" stroke="#f0f0f0" stroke-width="1.35" stroke-opacity="1.0"/>
<path d="M915.4,300.7 C973.4,300.7 834.7,66.9 892.7,66.9" fill="none" stroke="#f0f0f0" stroke-width="1.35" stroke-opacity="1.0"/>
<path d="M692.5,312.8 C741.5,312.8 716.3,386.9 765.3,386.9" fill="none" stroke="#f0f0f0" stroke-width="1.35" stroke-opacity="1.0"/>
<path d="M172.0,85.6 C190.7,85.6 203.3,79.6 222.0,79.6" fill="none" stroke="#2a90d8" stroke-width="0.9" stroke-opacity="1.0"/>
<path d="M592.7,313.3 C605.6,313.3 618.1,312.8 631.0,312.8" fill="none" stroke="#901616" stroke-width="1.0" stroke-opacity="1.0"/>
<path d="M592.7,324.8 C687.5,324.8 770.0,312.6 864.8,312.6" fill="none" stroke="#901616" stroke-width="1.0" stroke-opacity="1.0"/>
<path d="M594.0,336.5 C615.2,336.5 623.8,349.2 645.0,349.2" fill="none" stroke="#1060d0" stroke-width="1.1" stroke-opacity="1.0"/>
<path d="M708.0,356.0 C741.7,356.0 732.1,312.6 765.8,312.6" fill="none" stroke="#1060d0" stroke-width="1.1" stroke-opacity="1.0"/>
<path d="M737.5,420.5 C749.7,420.5 753.1,411.6 765.3,411.6" fill="none" stroke="#0d5fd0" stroke-width="1.1" stroke-opacity="1.0"/>
<path d="M283.0,347.0 C292.4,347.0 297.3,342.6 306.7,342.6" fill="none" stroke="#1a5cc0" stroke-width="1.0" stroke-opacity="1.0"/>
<path d="M283.0,347.0 C343.6,347.0 295.5,455.8 356.1,455.8" fill="none" stroke="#1a5cc0" stroke-width="1.0" stroke-opacity="1.0"/>
<path d="M381.7,342.6 C389.6,342.6 397.3,342.9 405.2,342.9" fill="none" stroke="#1a5cc0" stroke-width="1.0" stroke-opacity="1.0"/>
<path d="M381.7,342.6 C444.7,342.6 299.9,406.4 362.9,406.4" fill="none" stroke="#1a5cc0" stroke-width="1.0" stroke-opacity="1.0"/>
<path d="M429.0,406.4 C471.0,406.4 447.5,340.8 489.5,340.8" fill="none" stroke="#b080d8" stroke-width="1.0" stroke-opacity="1.0"/>
<path d="M461.6,455.8 C505.6,455.8 446.0,352.3 490.0,352.3" fill="none" stroke="#2a8a72" stroke-width="1.0" stroke-opacity="1.0"/>
<circle cx="892.7" cy="66.9" r="2.6" fill="#f4f4f4"/>
<circle cx="342.5" cy="300.1" r="2.6" fill="#f4f4f4"/>
<rect x="24.3" y="51.4" width="44.0" height="25.1" rx="4" fill="#000" fill-opacity="0.45" filter="url(#blur1)"/>
<rect x="23.8" y="49.9" width="44.0" height="25.1" rx="3" fill="#1c1d1b" stroke="#0c0c0c" stroke-width="0.6"/>
<linearGradient id="hg1" x1="0" y1="0" x2="1" y2="0"><stop offset="0" stop-color="#3a6894"/><stop offset="0.55" stop-color="#3a6894" stop-opacity="0.8"/><stop offset="1" stop-color="#3a6894" stop-opacity="0.08"/></linearGradient>
<path d="M23.8,60.6 L23.8,52.9 Q23.8,49.9 26.8,49.9 L64.8,49.9 Q67.8,49.9 67.8,52.9 L67.8,60.6 Z" fill="#2a2a2a"/>
<path d="M23.8,60.6 L23.8,52.9 Q23.8,49.9 26.8,49.9 L64.8,49.9 Q67.8,49.9 67.8,52.9 L67.8,60.6 Z" fill="url(#hg1)"/>
<path d="M23.8,60.6 L23.8,52.9 Q23.8,49.9 26.8,49.9 L64.8,49.9 Q67.8,49.9 67.8,52.9 L67.8,60.6 Z" fill="url(#gloss)"/>
<rect x="24.8" y="50.2" width="42.0" height="0.8" fill="#fff" fill-opacity="0.18"/>
<rect x="23.8" y="60.0" width="44.0" height="0.8" fill="#000" fill-opacity="0.35"/>
<rect x="27.7" y="51.8" width="7" height="2.4" fill="#e8e8e0"/><rect x="27.7" y="54.6" width="7" height="3.4" fill="#c8b890"/>
<text x="37.4" y="57.9" font-size="7" font-weight="normal" font-style="normal" text-anchor="start" fill="#000" fill-opacity="0.7" textLength="15.4" lengthAdjust="spacingAndGlyphs">Inputs</text>
<text x="36.8" y="57.3" font-size="7" font-weight="normal" font-style="normal" text-anchor="start" fill="#e6e6e6" stroke="#e6e6e6" stroke-width="0.22" textLength="15.4" lengthAdjust="spacingAndGlyphs">Inputs</text>
<polygon points="57.3,64.5 60.1,64.5 63.1,67.8 60.1,71.1 57.3,71.1" fill="#f2f2f2"/>
<rect x="920.6" y="51.8" width="48.4" height="24.4" rx="4" fill="#000" fill-opacity="0.45" filter="url(#blur1)"/>
<rect x="920.1" y="50.3" width="48.4" height="24.4" rx="3" fill="#1c1d1b" stroke="#0c0c0c" stroke-width="0.6"/>
<linearGradient id="hg2" x1="0" y1="0" x2="1" y2="0"><stop offset="0" stop-color="#3a6894"/><stop offset="0.55" stop-color="#3a6894" stop-opacity="0.8"/><stop offset="1" stop-color="#3a6894" stop-opacity="0.08"/></linearGradient>
<path d="M920.1,60.1 L920.1,53.3 Q920.1,50.3 923.1,50.3 L965.5,50.3 Q968.5,50.3 968.5,53.3 L968.5,60.1 Z" fill="#2a2a2a"/>
<path d="M920.1,60.1 L920.1,53.3 Q920.1,50.3 923.1,50.3 L965.5,50.3 Q968.5,50.3 968.5,53.3 L968.5,60.1 Z" fill="url(#hg2)"/>
<path d="M920.1,60.1 L920.1,53.3 Q920.1,50.3 923.1,50.3 L965.5,50.3 Q968.5,50.3 968.5,53.3 L968.5,60.1 Z" fill="url(#gloss)"/>
<rect x="921.1" y="50.6" width="46.4" height="0.8" fill="#fff" fill-opacity="0.18"/>
<rect x="920.1" y="59.5" width="48.4" height="0.8" fill="#000" fill-opacity="0.35"/>
<rect x="924" y="52.2" width="6.8" height="2.4" fill="#e8e8e0"/><rect x="924" y="55" width="6.8" height="3.4" fill="#c8b890"/>
<text x="933.4" y="58.0" font-size="7" font-weight="normal" font-style="normal" text-anchor="start" fill="#000" fill-opacity="0.7" textLength="20.0" lengthAdjust="spacingAndGlyphs">Outputs</text>
<text x="932.8" y="57.4" font-size="7" font-weight="normal" font-style="normal" text-anchor="start" fill="#e6e6e6" stroke="#e6e6e6" stroke-width="0.22" textLength="20.0" lengthAdjust="spacingAndGlyphs">Outputs</text>
<polygon points="924.4,64.3 927.2,64.3 930.2,67.6 927.2,70.9 924.4,70.9" fill="#f2f2f2"/>
<rect x="215.1" y="51.5" width="97.1" height="37.5" rx="4" fill="#000" fill-opacity="0.45" filter="url(#blur1)"/>
<rect x="214.6" y="50.0" width="97.1" height="37.5" rx="3" fill="#1c1d1b" stroke="#0c0c0c" stroke-width="0.6"/>
<linearGradient id="hg3" x1="0" y1="0" x2="1" y2="0"><stop offset="0" stop-color="#7c7c7c"/><stop offset="0.55" stop-color="#7c7c7c" stop-opacity="0.8"/><stop offset="1" stop-color="#7c7c7c" stop-opacity="0.08"/></linearGradient>
<path d="M214.6,60.2 L214.6,53.0 Q214.6,50.0 217.6,50.0 L308.7,50.0 Q311.7,50.0 311.7,53.0 L311.7,60.2 Z" fill="#2a2a2a"/>
<path d="M214.6,60.2 L214.6,53.0 Q214.6,50.0 217.6,50.0 L308.7,50.0 Q311.7,50.0 311.7,53.0 L311.7,60.2 Z" fill="url(#hg3)"/>
<path d="M214.6,60.2 L214.6,53.0 Q214.6,50.0 217.6,50.0 L308.7,50.0 Q311.7,50.0 311.7,53.0 L311.7,60.2 Z" fill="url(#gloss)"/>
<rect x="215.6" y="50.3" width="95.1" height="0.8" fill="#fff" fill-opacity="0.18"/>
<rect x="214.6" y="59.6" width="97.1" height="0.8" fill="#000" fill-opacity="0.35"/>
<text x="220.8" y="57.9" font-size="7" font-weight="bold" font-style="normal" text-anchor="start" fill="#000" fill-opacity="0.7" textLength="4.3" lengthAdjust="spacingAndGlyphs">?</text>
<text x="220.2" y="57.3" font-size="7" font-weight="bold" font-style="normal" text-anchor="start" fill="#e6e6e6" textLength="4.3" lengthAdjust="spacingAndGlyphs">?</text>
<text x="227.5" y="58.2" font-size="7" font-weight="normal" font-style="normal" text-anchor="start" fill="#000" fill-opacity="0.7" textLength="19.7" lengthAdjust="spacingAndGlyphs">Is Valid</text>
<text x="226.9" y="57.6" font-size="7" font-weight="normal" font-style="normal" text-anchor="start" fill="#e6e6e6" stroke="#e6e6e6" stroke-width="0.22" textLength="19.7" lengthAdjust="spacingAndGlyphs">Is Valid</text>
<polygon points="219.0,64.7 221.8,64.7 224.8,68.0 221.8,71.3 219.0,71.3" fill="#f2f2f2"/>
<text x="227.5" y="70.6" font-size="7" font-weight="normal" font-style="normal" text-anchor="start" fill="#000" fill-opacity="0.7" textLength="11.2" lengthAdjust="spacingAndGlyphs">Exec</text>
<text x="226.9" y="70.0" font-size="7" font-weight="normal" font-style="normal" text-anchor="start" fill="#e6e6e6" stroke="#e6e6e6" stroke-width="0.22" textLength="11.2" lengthAdjust="spacingAndGlyphs">Exec</text>
<circle cx="221.9" cy="79.6" r="2.9" fill="#18a0f0"/>
<polygon points="224.1,78.0 226.1,79.6 224.1,81.2" fill="#18a0f0"/>
<text x="228.3" y="82.2" font-size="7" font-weight="normal" font-style="normal" text-anchor="start" fill="#000" fill-opacity="0.7" textLength="30.3" lengthAdjust="spacingAndGlyphs">Input Object</text>
<text x="227.7" y="81.6" font-size="7" font-weight="normal" font-style="normal" text-anchor="start" fill="#e6e6e6" stroke="#e6e6e6" stroke-width="0.22" textLength="30.3" lengthAdjust="spacingAndGlyphs">Input Object</text>
<text x="285.1" y="70.6" font-size="7" font-weight="normal" font-style="normal" text-anchor="start" fill="#000" fill-opacity="0.7" textLength="14.7" lengthAdjust="spacingAndGlyphs">Is Valid</text>
<text x="284.5" y="70.0" font-size="7" font-weight="normal" font-style="normal" text-anchor="start" fill="#e6e6e6" stroke="#e6e6e6" stroke-width="0.22" textLength="14.7" lengthAdjust="spacingAndGlyphs">Is Valid</text>
<polygon points="301.4,64.7 304.2,64.7 307.2,68.0 304.2,71.3 301.4,71.3" fill="#f2f2f2"/>
<text x="271.3" y="82.2" font-size="7" font-weight="normal" font-style="normal" text-anchor="start" fill="#000" fill-opacity="0.7" textLength="28.5" lengthAdjust="spacingAndGlyphs">Is Not Valid</text>
<text x="270.7" y="81.6" font-size="7" font-weight="normal" font-style="normal" text-anchor="start" fill="#e6e6e6" stroke="#e6e6e6" stroke-width="0.22" textLength="28.5" lengthAdjust="spacingAndGlyphs">Is Not Valid</text>
<polygon points="301.4,76.3 304.2,76.3 307.2,79.6 304.2,82.9 301.4,82.9" fill="#f2f2f2"/>
<rect x="95.3" y="80.2" width="87.2" height="25.7" rx="5.5" fill="#000" fill-opacity="0.45" filter="url(#blur1)"/>
<rect x="94.8" y="78.7" width="87.2" height="25.7" rx="4.5" fill="url(#vargrad)" stroke="#0c0c0c" stroke-width="0.6"/>
<rect x="97" y="78.9" width="82" height="3" rx="1.5" fill="#4a78c0" fill-opacity="0.45" filter="url(#blur1)"/>
<text x="102.5" y="88.2" font-size="7" font-weight="normal" font-style="normal" text-anchor="start" fill="#000" fill-opacity="0.7" textLength="65.2" lengthAdjust="spacingAndGlyphs">End Slot ID Inv Component</text>
<text x="101.9" y="87.6" font-size="7" font-weight="normal" font-style="normal" text-anchor="start" fill="#e6e6e6" stroke="#e6e6e6" stroke-width="0.22" textLength="65.2" lengthAdjust="spacingAndGlyphs">End Slot ID Inv Component</text>
<circle cx="171.8" cy="85.6" r="2.9" fill="#18a0f0"/>
<polygon points="174.0,84.0 176.0,85.6 174.0,87.2" fill="#18a0f0"/>
<text x="126.6" y="99.8" font-size="7" font-weight="normal" font-style="normal" text-anchor="start" fill="#000" fill-opacity="0.7" textLength="41.1" lengthAdjust="spacingAndGlyphs">End Slot ID Index</text>
<text x="126.0" y="99.2" font-size="7" font-weight="normal" font-style="normal" text-anchor="start" fill="#e6e6e6" stroke="#e6e6e6" stroke-width="0.22" textLength="41.1" lengthAdjust="spacingAndGlyphs">End Slot ID Index</text>
<circle cx="172.3" cy="97.2" r="2.3" fill="#111" stroke="#20b080" stroke-width="1.2"/>
<polygon points="174.7,95.6 176.5,97.2 174.7,98.8" fill="#20b080"/>
<rect x="228.6" y="341.5" width="64.9" height="13.9" rx="7.5" fill="#000" fill-opacity="0.45" filter="url(#blur1)"/>
<rect x="228.1" y="340.0" width="64.9" height="13.9" rx="6.5" fill="url(#vargrad)" stroke="#0c0c0c" stroke-width="0.6"/>
<text x="236.5" y="349.6" font-size="7" font-weight="normal" font-style="normal" text-anchor="start" fill="#000" fill-opacity="0.7" textLength="42.1" lengthAdjust="spacingAndGlyphs">Equipment Slot L</text>
<text x="235.9" y="349.0" font-size="7" font-weight="normal" font-style="normal" text-anchor="start" fill="#e6e6e6" stroke="#e6e6e6" stroke-width="0.22" textLength="42.1" lengthAdjust="spacingAndGlyphs">Equipment Slot L</text>
<circle cx="282.9" cy="347.0" r="2.9" fill="#1060e0"/>
<polygon points="285.1,345.4 287.1,347.0 285.1,348.6" fill="#1060e0"/>
<rect x="299.9" y="327.1" width="91.7" height="23.6" rx="4" fill="#000" fill-opacity="0.45" filter="url(#blur1)"/>
<rect x="299.4" y="325.6" width="91.7" height="23.6" rx="3" fill="#1c1d1b" stroke="#0c0c0c" stroke-width="0.6"/>
<linearGradient id="hg4" x1="0" y1="0" x2="1" y2="0"><stop offset="0" stop-color="#1a4592"/><stop offset="0.55" stop-color="#1a4592" stop-opacity="0.8"/><stop offset="1" stop-color="#1a4592" stop-opacity="0.08"/></linearGradient>
<path d="M299.4,336.0 L299.4,328.6 Q299.4,325.6 302.4,325.6 L388.1,325.6 Q391.1,325.6 391.1,328.6 L391.1,336.0 Z" fill="#2a2a2a"/>
<path d="M299.4,336.0 L299.4,328.6 Q299.4,325.6 302.4,325.6 L388.1,325.6 Q391.1,325.6 391.1,328.6 L391.1,336.0 Z" fill="url(#hg4)"/>
<path d="M299.4,336.0 L299.4,328.6 Q299.4,325.6 302.4,325.6 L388.1,325.6 Q391.1,325.6 391.1,328.6 L391.1,336.0 Z" fill="url(#gloss)"/>
<rect x="300.4" y="325.9" width="89.7" height="0.8" fill="#fff" fill-opacity="0.18"/>
<rect x="299.4" y="335.4" width="91.7" height="0.8" fill="#000" fill-opacity="0.35"/>
<text x="312.2" y="333.4" font-size="7" font-weight="bold" font-style="normal" text-anchor="start" fill="#000" fill-opacity="0.7" textLength="60.9" lengthAdjust="spacingAndGlyphs">Break S_EquipmentSlot</text>
<text x="311.6" y="332.8" font-size="7" font-weight="bold" font-style="normal" text-anchor="start" fill="#e6e6e6" textLength="60.9" lengthAdjust="spacingAndGlyphs">Break S_EquipmentSlot</text>
<path d="M304.0,330.8 L308.0,330.8" stroke="#80b8ff" stroke-width="1.1" fill="none"/><path d="M308.0,330.8 L309.5,328.2 M308.0,330.8 L309.5,333.4" stroke="#e8eef8" stroke-width="0.9" fill="none"/>
<circle cx="306.7" cy="342.6" r="2.9" fill="#1060e0"/>
<polygon points="308.9,341.0 310.9,342.6 308.9,344.2" fill="#1060e0"/>
<text x="313.1" y="345.2" font-size="7" font-weight="normal" font-style="normal" text-anchor="start" fill="#000" fill-opacity="0.7" textLength="43.1" lengthAdjust="spacingAndGlyphs">S Equipment Slot</text>
<text x="312.5" y="344.6" font-size="7" font-weight="normal" font-style="normal" text-anchor="start" fill="#e6e6e6" stroke="#e6e6e6" stroke-width="0.22" textLength="43.1" lengthAdjust="spacingAndGlyphs">S Equipment Slot</text>
<text x="366.6" y="345.2" font-size="7" font-weight="normal" font-style="normal" text-anchor="start" fill="#000" fill-opacity="0.7" textLength="10.9" lengthAdjust="spacingAndGlyphs">Item</text>
<text x="366.0" y="344.6" font-size="7" font-weight="normal" font-style="normal" text-anchor="start" fill="#e6e6e6" stroke="#e6e6e6" stroke-width="0.22" textLength="10.9" lengthAdjust="spacingAndGlyphs">Item</text>
<circle cx="381.7" cy="342.6" r="2.9" fill="#1060e0"/>
<polygon points="383.9,341.0 385.9,342.6 383.9,344.2" fill="#1060e0"/>
<rect x="398.3" y="326.8" width="74.3" height="36.2" rx="4" fill="#000" fill-opacity="0.45" filter="url(#blur1)"/>
<rect x="397.8" y="325.3" width="74.3" height="36.2" rx="3" fill="#1c1d1b" stroke="#0c0c0c" stroke-width="0.6"/>
<linearGradient id="hg5" x1="0" y1="0" x2="1" y2="0"><stop offset="0" stop-color="#4e8a4e"/><stop offset="0.55" stop-color="#4e8a4e" stop-opacity="0.8"/><stop offset="1" stop-color="#4e8a4e" stop-opacity="0.08"/></linearGradient>
<path d="M397.8,336.1 L397.8,328.3 Q397.8,325.3 400.8,325.3 L469.1,325.3 Q472.1,325.3 472.1,328.3 L472.1,336.1 Z" fill="#2a2a2a"/>
<path d="M397.8,336.1 L397.8,328.3 Q397.8,325.3 400.8,325.3 L469.1,325.3 Q472.1,325.3 472.1,328.3 L472.1,336.1 Z" fill="url(#hg5)"/>
<path d="M397.8,336.1 L397.8,328.3 Q397.8,325.3 400.8,325.3 L469.1,325.3 Q472.1,325.3 472.1,328.3 L472.1,336.1 Z" fill="url(#gloss)"/>
<rect x="398.8" y="325.6" width="72.3" height="0.8" fill="#fff" fill-opacity="0.18"/>
<rect x="397.8" y="335.5" width="74.3" height="0.8" fill="#000" fill-opacity="0.35"/>
<text x="403.2" y="333.7" font-size="9" font-weight="normal" font-style="italic" text-anchor="start" fill="#9ee09e" textLength="5.4" lengthAdjust="spacingAndGlyphs">f</text>
<text x="411.6" y="333.3" font-size="7" font-weight="bold" font-style="normal" text-anchor="start" fill="#000" fill-opacity="0.7" textLength="37.2" lengthAdjust="spacingAndGlyphs">SGK Item Size</text>
<text x="411.0" y="332.7" font-size="7" font-weight="bold" font-style="normal" text-anchor="start" fill="#e6e6e6" textLength="37.2" lengthAdjust="spacingAndGlyphs">SGK Item Size</text>
<circle cx="405.2" cy="342.9" r="2.9" fill="#1060e0"/>
<polygon points="407.4,341.3 409.4,342.9 407.4,344.5" fill="#1060e0"/>
<text x="412.6" y="345.5" font-size="7" font-weight="normal" font-style="normal" text-anchor="start" fill="#000" fill-opacity="0.7" textLength="19.0" lengthAdjust="spacingAndGlyphs">Inv Item</text>
<text x="412.0" y="344.9" font-size="7" font-weight="normal" font-style="normal" text-anchor="start" fill="#e6e6e6" stroke="#e6e6e6" stroke-width="0.22" textLength="19.0" lengthAdjust="spacingAndGlyphs">Inv Item</text>
<text x="442.4" y="345.5" font-size="7" font-weight="normal" font-style="normal" text-anchor="start" fill="#000" fill-opacity="0.7" textLength="16.2" lengthAdjust="spacingAndGlyphs">Height</text>
<text x="441.8" y="344.9" font-size="7" font-weight="normal" font-style="normal" text-anchor="start" fill="#e6e6e6" stroke="#e6e6e6" stroke-width="0.22" textLength="16.2" lengthAdjust="spacingAndGlyphs">Height</text>
<circle cx="463.3" cy="342.9" r="2.3" fill="#111" stroke="#20b090" stroke-width="1.2"/>
<polygon points="465.7,341.3 467.5,342.9 465.7,344.5" fill="#20b090"/>
<text x="444.4" y="356.8" font-size="7" font-weight="normal" font-style="normal" text-anchor="start" fill="#000" fill-opacity="0.7" textLength="14.2" lengthAdjust="spacingAndGlyphs">Width</text>
<text x="443.8" y="356.2" font-size="7" font-weight="normal" font-style="normal" text-anchor="start" fill="#e6e6e6" stroke="#e6e6e6" stroke-width="0.22" textLength="14.2" lengthAdjust="spacingAndGlyphs">Width</text>
<circle cx="463.3" cy="354.2" r="2.3" fill="#111" stroke="#20b090" stroke-width="1.2"/>
<polygon points="465.7,352.6 467.5,354.2 465.7,355.8" fill="#20b090"/>
<rect x="481.7" y="275.9" width="121.5" height="85.8" rx="4" fill="#000" fill-opacity="0.45" filter="url(#blur1)"/>
<rect x="481.2" y="274.4" width="121.5" height="85.8" rx="4" fill="#f0a01c"/>
<rect x="482.8" y="276.0" width="118.3" height="82.6" rx="3" fill="#1c1d1b" stroke="#0c0c0c" stroke-width="0.6"/>
<linearGradient id="hg6" x1="0" y1="0" x2="1" y2="0"><stop offset="0" stop-color="#46698a"/><stop offset="0.55" stop-color="#46698a" stop-opacity="0.8"/><stop offset="1" stop-color="#46698a" stop-opacity="0.08"/></linearGradient>
<path d="M482.8,293.9 L482.8,279.0 Q482.8,276.0 485.8,276.0 L598.1,276.0 Q601.1,276.0 601.1,279.0 L601.1,293.9 Z" fill="#2a2a2a"/>
<path d="M482.8,293.9 L482.8,279.0 Q482.8,276.0 485.8,276.0 L598.1,276.0 Q601.1,276.0 601.1,279.0 L601.1,293.9 Z" fill="url(#hg6)"/>
<path d="M482.8,293.9 L482.8,279.0 Q482.8,276.0 485.8,276.0 L598.1,276.0 Q601.1,276.0 601.1,279.0 L601.1,293.9 Z" fill="url(#gloss)"/>
<rect x="483.8" y="276.3" width="116.3" height="0.8" fill="#fff" fill-opacity="0.18"/>
<rect x="482.8" y="293.3" width="118.3" height="0.8" fill="#000" fill-opacity="0.35"/>
<text x="486.8" y="284.1" font-size="9" font-weight="normal" font-style="italic" text-anchor="start" fill="#4a98f0" textLength="4.7" lengthAdjust="spacingAndGlyphs">f</text>
<text x="495.9" y="283.7" font-size="7" font-weight="bold" font-style="normal" text-anchor="start" fill="#000" fill-opacity="0.7" textLength="88.5" lengthAdjust="spacingAndGlyphs">Search Equipment for Empty Slots</text>
<text x="495.3" y="283.1" font-size="7" font-weight="bold" font-style="normal" text-anchor="start" fill="#e6e6e6" textLength="88.5" lengthAdjust="spacingAndGlyphs">Search Equipment for Empty Slots</text>
<text x="495.3" y="291.5" font-size="7" font-weight="normal" font-style="italic" text-anchor="start" fill="#8e9c96" textLength="82.0" lengthAdjust="spacingAndGlyphs">Target is BP Equipment Inventory</text>
<polygon points="487.0,298.2 489.8,298.2 492.8,301.5 489.8,304.8 487.0,304.8" fill="#f2f2f2"/>
<polygon points="590.9,298.2 593.7,298.2 596.7,301.5 593.7,304.8 590.9,304.8" fill="#f2f2f2"/>
<circle cx="490.0" cy="313.9" r="2.3" fill="#111" stroke="#1a90e0" stroke-width="1.2"/>
<polygon points="492.4,312.3 494.2,313.9 492.4,315.5" fill="#1a90e0"/>
<text x="496.8" y="316.5" font-size="7" font-weight="normal" font-style="normal" text-anchor="start" fill="#000" fill-opacity="0.7" textLength="16.0" lengthAdjust="spacingAndGlyphs">Target</text>
<text x="496.2" y="315.9" font-size="7" font-weight="normal" font-style="normal" text-anchor="start" fill="#e6e6e6" stroke="#e6e6e6" stroke-width="0.22" textLength="16.0" lengthAdjust="spacingAndGlyphs">Target</text>
<rect x="514.3" y="310.7" width="13.8" height="7.1" rx="1" fill="none" stroke="#9a9a9a" stroke-width="0.8"/>
<text x="516.6" y="316.2" font-size="6.4" font-weight="normal" font-style="normal" text-anchor="start" fill="#e0e0e0">self</text>
<circle cx="490.0" cy="327.5" r="2.3" fill="#111" stroke="#a01818" stroke-width="1.2"/>
<polygon points="492.4,325.9 494.2,327.5 492.4,329.1" fill="#a01818"/>
<text x="496.8" y="330.1" font-size="7" font-weight="normal" font-style="normal" text-anchor="start" fill="#000" fill-opacity="0.7" textLength="36.8" lengthAdjust="spacingAndGlyphs">Allow Rotation</text>
<text x="496.2" y="329.5" font-size="7" font-weight="normal" font-style="normal" text-anchor="start" fill="#e6e6e6" stroke="#e6e6e6" stroke-width="0.22" textLength="36.8" lengthAdjust="spacingAndGlyphs">Allow Rotation</text>
<rect x="536" y="323.9" width="7.1" height="7.1" rx="0.8" fill="#d8d8d8"/>
<path d="M537.3,327.6 L539.3,329.6 L542.2,325.5" stroke="#333" stroke-width="1" fill="none"/>
<circle cx="490.0" cy="340.8" r="2.9" fill="#c880f0"/>
<polygon points="492.2,339.2 494.2,340.8 492.2,342.4" fill="#c880f0"/>
<text x="496.8" y="343.4" font-size="7" font-weight="normal" font-style="normal" text-anchor="start" fill="#000" fill-opacity="0.7" textLength="17.8" lengthAdjust="spacingAndGlyphs">Item ID</text>
<text x="496.2" y="342.8" font-size="7" font-weight="normal" font-style="normal" text-anchor="start" fill="#e6e6e6" stroke="#e6e6e6" stroke-width="0.22" textLength="17.8" lengthAdjust="spacingAndGlyphs">Item ID</text>
<circle cx="490.0" cy="352.3" r="2.9" fill="#108878"/>
<polygon points="492.2,350.7 494.2,352.3 492.2,353.9" fill="#108878"/>
<text x="496.8" y="354.9" font-size="7" font-weight="normal" font-style="normal" text-anchor="start" fill="#000" fill-opacity="0.7" textLength="26.3" lengthAdjust="spacingAndGlyphs">Ignore Slot</text>
<text x="496.2" y="354.3" font-size="7" font-weight="normal" font-style="normal" text-anchor="start" fill="#e6e6e6" stroke="#e6e6e6" stroke-width="0.22" textLength="26.3" lengthAdjust="spacingAndGlyphs">Ignore Slot</text>
<text x="556.4" y="315.9" font-size="7" font-weight="normal" font-style="normal" text-anchor="start" fill="#000" fill-opacity="0.7" textLength="31.9" lengthAdjust="spacingAndGlyphs">Space Found</text>
<text x="555.8" y="315.3" font-size="7" font-weight="normal" font-style="normal" text-anchor="start" fill="#e6e6e6" stroke="#e6e6e6" stroke-width="0.22" textLength="31.9" lengthAdjust="spacingAndGlyphs">Space Found</text>
<circle cx="592.2" cy="313.3" r="2.9" fill="#b01010"/>
<polygon points="594.4,311.7 596.4,313.3 594.4,314.9" fill="#b01010"/>
<text x="566.6" y="327.4" font-size="7" font-weight="normal" font-style="normal" text-anchor="start" fill="#000" fill-opacity="0.7" textLength="21.7" lengthAdjust="spacingAndGlyphs">Rotation</text>
<text x="566.0" y="326.8" font-size="7" font-weight="normal" font-style="normal" text-anchor="start" fill="#e6e6e6" stroke="#e6e6e6" stroke-width="0.22" textLength="21.7" lengthAdjust="spacingAndGlyphs">Rotation</text>
<circle cx="592.2" cy="324.8" r="2.9" fill="#b01010"/>
<polygon points="594.4,323.2 596.4,324.8 594.4,326.4" fill="#b01010"/>
<text x="560.1" y="339.1" font-size="7" font-weight="normal" font-style="normal" text-anchor="start" fill="#000" fill-opacity="0.7" textLength="30.0" lengthAdjust="spacingAndGlyphs">Found Slots</text>
<text x="559.5" y="338.5" font-size="7" font-weight="normal" font-style="normal" text-anchor="start" fill="#e6e6e6" stroke="#e6e6e6" stroke-width="0.22" textLength="30.0" lengthAdjust="spacingAndGlyphs">Found Slots</text>
<rect x="591.20" y="333.70" width="1.6" height="1.6" fill="#1a6ad8"/>
<rect x="591.20" y="335.80" width="1.6" height="1.6" fill="#1a6ad8"/>
<rect x="591.20" y="337.90" width="1.6" height="1.6" fill="#1a6ad8"/>
<rect x="593.30" y="333.70" width="1.6" height="1.6" fill="#1a6ad8"/>
<rect x="593.30" y="335.80" width="1.6" height="1.6" fill="#1a6ad8"/>
<rect x="593.30" y="337.90" width="1.6" height="1.6" fill="#1a6ad8"/>
<rect x="595.40" y="333.70" width="1.6" height="1.6" fill="#1a6ad8"/>
<rect x="595.40" y="335.80" width="1.6" height="1.6" fill="#1a6ad8"/>
<rect x="595.40" y="337.90" width="1.6" height="1.6" fill="#1a6ad8"/>
<rect x="624.0" y="284.8" width="77.0" height="36.9" rx="4" fill="#000" fill-opacity="0.45" filter="url(#blur1)"/>
<rect x="623.5" y="283.3" width="77.0" height="36.9" rx="3" fill="#1c1d1b" stroke="#0c0c0c" stroke-width="0.6"/>
<linearGradient id="hg7" x1="0" y1="0" x2="1" y2="0"><stop offset="0" stop-color="#7c7c7c"/><stop offset="0.55" stop-color="#7c7c7c" stop-opacity="0.8"/><stop offset="1" stop-color="#7c7c7c" stop-opacity="0.08"/></linearGradient>
<path d="M623.5,292.8 L623.5,286.3 Q623.5,283.3 626.5,283.3 L697.5,283.3 Q700.5,283.3 700.5,286.3 L700.5,292.8 Z" fill="#2a2a2a"/>
<path d="M623.5,292.8 L623.5,286.3 Q623.5,283.3 626.5,283.3 L697.5,283.3 Q700.5,283.3 700.5,286.3 L700.5,292.8 Z" fill="url(#hg7)"/>
<path d="M623.5,292.8 L623.5,286.3 Q623.5,283.3 626.5,283.3 L697.5,283.3 Q700.5,283.3 700.5,286.3 L700.5,292.8 Z" fill="url(#gloss)"/>
<rect x="624.5" y="283.6" width="75.0" height="0.8" fill="#fff" fill-opacity="0.18"/>
<rect x="623.5" y="292.2" width="77.0" height="0.8" fill="#000" fill-opacity="0.35"/>
<path d="M632,285 L629,288 L632,291 M629,288 L634,288" stroke="#e8e8e8" stroke-width="0.9" fill="none"/>
<text x="637.4" y="290.8" font-size="7" font-weight="normal" font-style="normal" text-anchor="start" fill="#000" fill-opacity="0.7" textLength="18.1" lengthAdjust="spacingAndGlyphs">Branch</text>
<text x="636.8" y="290.2" font-size="7" font-weight="normal" font-style="normal" text-anchor="start" fill="#e6e6e6" stroke="#e6e6e6" stroke-width="0.22" textLength="18.1" lengthAdjust="spacingAndGlyphs">Branch</text>
<polygon points="628.1,297.5 630.9,297.5 633.9,300.8 630.9,304.1 628.1,304.1" fill="#f2f2f2"/>
<circle cx="631.1" cy="312.8" r="2.9" fill="#b01010"/>
<polygon points="633.3,311.2 635.3,312.8 633.3,314.4" fill="#b01010"/>
<text x="638.4" y="315.4" font-size="7" font-weight="normal" font-style="normal" text-anchor="start" fill="#000" fill-opacity="0.7" textLength="23.7" lengthAdjust="spacingAndGlyphs">Condition</text>
<text x="637.8" y="314.8" font-size="7" font-weight="normal" font-style="normal" text-anchor="start" fill="#e6e6e6" stroke="#e6e6e6" stroke-width="0.22" textLength="23.7" lengthAdjust="spacingAndGlyphs">Condition</text>
<text x="678.1" y="303.4" font-size="7" font-weight="normal" font-style="normal" text-anchor="start" fill="#000" fill-opacity="0.7" textLength="10.6" lengthAdjust="spacingAndGlyphs">True</text>
<text x="677.5" y="302.8" font-size="7" font-weight="normal" font-style="normal" text-anchor="start" fill="#e6e6e6" stroke="#e6e6e6" stroke-width="0.22" textLength="10.6" lengthAdjust="spacingAndGlyphs">True</text>
<polygon points="689.5,297.5 692.3,297.5 695.3,300.8 692.3,304.1 689.5,304.1" fill="#f2f2f2"/>
<text x="674.9" y="315.4" font-size="7" font-weight="normal" font-style="normal" text-anchor="start" fill="#000" fill-opacity="0.7" textLength="13.8" lengthAdjust="spacingAndGlyphs">False</text>
<text x="674.3" y="314.8" font-size="7" font-weight="normal" font-style="normal" text-anchor="start" fill="#e6e6e6" stroke="#e6e6e6" stroke-width="0.22" textLength="13.8" lengthAdjust="spacingAndGlyphs">False</text>
<polygon points="689.5,309.5 692.3,309.5 695.3,312.8 692.3,316.1 689.5,316.1" fill="#f2f2f2"/>
<rect x="637.9" y="341.2" width="80.6" height="32.3" rx="7" fill="#000" fill-opacity="0.45" filter="url(#blur1)"/>
<rect x="637.4" y="339.7" width="80.6" height="32.3" rx="6" fill="url(#vargrad)" stroke="#0c0c0c" stroke-width="0.6"/>
<rect x="664.2" y="343.2" width="7.6" height="7.4" rx="0.8" fill="#24518a" fill-opacity="0.6"/>
<rect x="664.2" y="352.8" width="7.6" height="7.4" rx="0.8" fill="#24518a" fill-opacity="0.6"/>
<rect x="664.2" y="362.4" width="7.6" height="7.4" rx="0.8" fill="#24518a" fill-opacity="0.6"/>
<rect x="673.8" y="343.2" width="7.6" height="7.4" rx="0.8" fill="#24518a" fill-opacity="0.6"/>
<rect x="673.8" y="352.8" width="7.6" height="7.4" rx="0.8" fill="#24518a" fill-opacity="0.6"/>
<rect x="673.8" y="362.4" width="7.6" height="7.4" rx="0.8" fill="#24518a" fill-opacity="0.6"/>
<rect x="683.4" y="343.2" width="7.6" height="7.4" rx="0.8" fill="#24518a" fill-opacity="0.6"/>
<rect x="683.4" y="352.8" width="7.6" height="7.4" rx="0.8" fill="#24518a" fill-opacity="0.6"/>
<rect x="683.4" y="362.4" width="7.6" height="7.4" rx="0.8" fill="#24518a" fill-opacity="0.6"/>
<text x="668.2" y="360.0" font-size="11.5" font-weight="bold" font-style="normal" text-anchor="start" fill="#cdd0d4" textLength="18.0" lengthAdjust="spacingAndGlyphs">GET</text>
<rect x="642.20" y="346.40" width="1.6" height="1.6" fill="#1a6ad8"/>
<rect x="642.20" y="348.50" width="1.6" height="1.6" fill="#1a6ad8"/>
<rect x="642.20" y="350.60" width="1.6" height="1.6" fill="#1a6ad8"/>
<rect x="644.30" y="346.40" width="1.6" height="1.6" fill="#1a6ad8"/>
<rect x="644.30" y="348.50" width="1.6" height="1.6" fill="#1a6ad8"/>
<rect x="644.30" y="350.60" width="1.6" height="1.6" fill="#1a6ad8"/>
<rect x="646.40" y="346.40" width="1.6" height="1.6" fill="#1a6ad8"/>
<rect x="646.40" y="348.50" width="1.6" height="1.6" fill="#1a6ad8"/>
<rect x="646.40" y="350.60" width="1.6" height="1.6" fill="#1a6ad8"/>
<circle cx="645.0" cy="361.0" r="2.3" fill="#111" stroke="#20b090" stroke-width="1.2"/>
<polygon points="647.4,359.4 649.2,361.0 647.4,362.6" fill="#20b090"/>
<rect x="653" y="357.4" width="9.1" height="7.6" rx="1" fill="none" stroke="#9a9a9a" stroke-width="0.8"/>
<text x="655.8" y="363.0" font-size="6.5" font-weight="normal" font-style="normal" text-anchor="start" fill="#e0e0e0" textLength="3.8" lengthAdjust="spacingAndGlyphs">0</text>
<circle cx="708.1" cy="355.9" r="2.9" fill="#1060e0"/>
<polygon points="710.3,354.3 712.3,355.9 710.3,357.5" fill="#1060e0"/>
<rect x="758.4" y="291.2" width="75.7" height="30.6" rx="6" fill="#000" fill-opacity="0.45" filter="url(#blur1)"/>
<rect x="757.9" y="289.7" width="75.7" height="30.6" rx="5" fill="url(#setgrad)" stroke="#0c0c0c" stroke-width="0.6"/>
<clipPath id="clipsetb"><rect x="757.9" y="289.7" width="75.7" height="30.6" rx="5"/></clipPath>
<ellipse cx="795.5" cy="290.5" rx="36" ry="11" fill="url(#glowb)" clip-path="url(#clipsetb)"/>
<text x="791.5" y="299.0" font-size="6.8" font-weight="bold" font-style="normal" text-anchor="start" fill="#000" fill-opacity="0.7" textLength="9.1" lengthAdjust="spacingAndGlyphs">SET</text>
<text x="790.9" y="298.4" font-size="6.8" font-weight="bold" font-style="normal" text-anchor="start" fill="#e6e6e6" textLength="9.1" lengthAdjust="spacingAndGlyphs">SET</text>
<polygon points="763.0,297.4 765.8,297.4 768.8,300.7 765.8,304.0 763.0,304.0" fill="#f2f2f2"/>
<polygon points="821.5,297.4 824.3,297.4 827.3,300.7 824.3,304.0 821.5,304.0" fill="#f2f2f2"/>
<circle cx="765.8" cy="312.6" r="2.9" fill="#1060e0"/>
<polygon points="768.0,311.0 770.0,312.6 768.0,314.2" fill="#1060e0"/>
<text x="773.3" y="315.2" font-size="7" font-weight="normal" font-style="normal" text-anchor="start" fill="#000" fill-opacity="0.7" textLength="33.1" lengthAdjust="spacingAndGlyphs">End Inv Slot L</text>
<text x="772.7" y="314.6" font-size="7" font-weight="normal" font-style="normal" text-anchor="start" fill="#e6e6e6" stroke="#e6e6e6" stroke-width="0.22" textLength="33.1" lengthAdjust="spacingAndGlyphs">End Inv Slot L</text>
<circle cx="823.4" cy="312.6" r="2.3" fill="#111" stroke="#1060e0" stroke-width="1.2"/>
<polygon points="825.8,311.0 827.6,312.6 825.8,314.2" fill="#1060e0"/>
<rect x="856.9" y="291.4" width="68.2" height="30.4" rx="6" fill="#000" fill-opacity="0.45" filter="url(#blur1)"/>
<rect x="856.4" y="289.9" width="68.2" height="30.4" rx="5" fill="url(#setgrad)" stroke="#0c0c0c" stroke-width="0.6"/>
<clipPath id="clipsetr"><rect x="856.4" y="289.9" width="68.2" height="30.4" rx="5"/></clipPath>
<ellipse cx="890.5" cy="290.5" rx="33" ry="11" fill="url(#glowr)" clip-path="url(#clipsetr)"/>
<text x="886.1" y="299.0" font-size="6.8" font-weight="bold" font-style="normal" text-anchor="start" fill="#000" fill-opacity="0.7" textLength="9.0" lengthAdjust="spacingAndGlyphs">SET</text>
<text x="885.5" y="298.4" font-size="6.8" font-weight="bold" font-style="normal" text-anchor="start" fill="#e6e6e6" textLength="9.0" lengthAdjust="spacingAndGlyphs">SET</text>
<polygon points="861.8,297.4 864.6,297.4 867.6,300.7 864.6,304.0 861.8,304.0" fill="#f2f2f2"/>
<polygon points="912.4,297.4 915.2,297.4 918.2,300.7 915.2,304.0 912.4,304.0" fill="#f2f2f2"/>
<circle cx="864.8" cy="312.6" r="2.9" fill="#b01010"/>
<polygon points="867.0,311.0 869.0,312.6 867.0,314.2" fill="#b01010"/>
<text x="871.8" y="315.2" font-size="7" font-weight="normal" font-style="normal" text-anchor="start" fill="#000" fill-opacity="0.7" textLength="23.5" lengthAdjust="spacingAndGlyphs">Rotated L</text>
<text x="871.2" y="314.6" font-size="7" font-weight="normal" font-style="normal" text-anchor="start" fill="#e6e6e6" stroke="#e6e6e6" stroke-width="0.22" textLength="23.5" lengthAdjust="spacingAndGlyphs">Rotated L</text>
<circle cx="914.5" cy="312.6" r="2.3" fill="#111" stroke="#a01010" stroke-width="1.2"/>
<polygon points="916.9,311.0 918.7,312.6 916.9,314.2" fill="#a01010"/>
<path d="M592.7,324.8 C687.5,324.8 770.0,312.6 864.8,312.6" fill="none" stroke="#901818" stroke-width="0.9" stroke-opacity="0.55"/>
<rect x="758.9" y="354.9" width="147.7" height="65.0" rx="4" fill="#000" fill-opacity="0.45" filter="url(#blur1)"/>
<rect x="758.4" y="353.4" width="147.7" height="65.0" rx="3" fill="#1c1d1b" stroke="#0c0c0c" stroke-width="0.6"/>
<linearGradient id="hg8" x1="0" y1="0" x2="1" y2="0"><stop offset="0" stop-color="#46698a"/><stop offset="0.55" stop-color="#46698a" stop-opacity="0.8"/><stop offset="1" stop-color="#46698a" stop-opacity="0.08"/></linearGradient>
<path d="M758.4,379.2 L758.4,356.4 Q758.4,353.4 761.4,353.4 L903.1,353.4 Q906.1,353.4 906.1,356.4 L906.1,379.2 Z" fill="#2a2a2a"/>
<path d="M758.4,379.2 L758.4,356.4 Q758.4,353.4 761.4,353.4 L903.1,353.4 Q906.1,353.4 906.1,356.4 L906.1,379.2 Z" fill="url(#hg8)"/>
<path d="M758.4,379.2 L758.4,356.4 Q758.4,353.4 761.4,353.4 L903.1,353.4 Q906.1,353.4 906.1,356.4 L906.1,379.2 Z" fill="url(#gloss)"/>
<rect x="759.4" y="353.7" width="145.7" height="0.8" fill="#fff" fill-opacity="0.18"/>
<rect x="758.4" y="378.6" width="147.7" height="0.8" fill="#000" fill-opacity="0.35"/>
<polygon points="765.2,355.6 768.5,358.7 765.2,361.8 762,358.7" fill="none" stroke="#f0f0f0" stroke-width="1"/>
<text x="771.2" y="361.3" font-size="7" font-weight="bold" font-style="normal" text-anchor="start" fill="#000" fill-opacity="0.7" textLength="66.5" lengthAdjust="spacingAndGlyphs">Client Create Notification</text>
<text x="770.6" y="360.7" font-size="7" font-weight="bold" font-style="normal" text-anchor="start" fill="#e6e6e6" textLength="66.5" lengthAdjust="spacingAndGlyphs">Client Create Notification</text>
<text x="770.6" y="370.4" font-size="7" font-weight="normal" font-style="italic" text-anchor="start" fill="#8e9c96" textLength="70.4" lengthAdjust="spacingAndGlyphs">Target is BP Player Inventory</text>
<text x="770.6" y="376.5" font-size="7" font-weight="normal" font-style="italic" text-anchor="start" fill="#8e9c96" textLength="120.0" lengthAdjust="spacingAndGlyphs">RELIABLE Replicated To Owning Client (if server)</text>
<polygon points="762.3,383.6 765.1,383.6 768.1,386.9 765.1,390.2 762.3,390.2" fill="#f2f2f2"/>
<polygon points="895.4,383.6 898.2,383.6 901.2,386.9 898.2,390.2 895.4,390.2" fill="none" stroke="#f2f2f2" stroke-width="0.9"/>
<circle cx="765.3" cy="399.4" r="2.3" fill="#111" stroke="#1a90e0" stroke-width="1.2"/>
<polygon points="767.7,397.8 769.5,399.4 767.7,401.0" fill="#1a90e0"/>
<text x="772.4" y="402.0" font-size="7" font-weight="normal" font-style="normal" text-anchor="start" fill="#000" fill-opacity="0.7" textLength="15.6" lengthAdjust="spacingAndGlyphs">Target</text>
<text x="771.8" y="401.4" font-size="7" font-weight="normal" font-style="normal" text-anchor="start" fill="#e6e6e6" stroke="#e6e6e6" stroke-width="0.22" textLength="15.6" lengthAdjust="spacingAndGlyphs">Target</text>
<rect x="789.5" y="395.6" width="14" height="7.6" rx="1" fill="none" stroke="#9a9a9a" stroke-width="0.8"/>
<text x="791.8" y="401.6" font-size="6.4" font-weight="normal" font-style="normal" text-anchor="start" fill="#e0e0e0">self</text>
<circle cx="765.3" cy="411.6" r="2.9" fill="#1060e0"/>
<polygon points="767.5,410.0 769.5,411.6 767.5,413.2" fill="#1060e0"/>
<text x="772.4" y="414.2" font-size="7" font-weight="normal" font-style="normal" text-anchor="start" fill="#000" fill-opacity="0.7" textLength="48.4" lengthAdjust="spacingAndGlyphs">Notification Details</text>
<text x="771.8" y="413.6" font-size="7" font-weight="normal" font-style="normal" text-anchor="start" fill="#e6e6e6" stroke="#e6e6e6" stroke-width="0.22" textLength="48.4" lengthAdjust="spacingAndGlyphs">Notification Details</text>
<rect x="589.1" y="405.2" width="157.7" height="76.1" rx="4" fill="#000" fill-opacity="0.45" filter="url(#blur1)"/>
<rect x="588.6" y="403.7" width="157.7" height="76.1" rx="3" fill="#1c1d1b" stroke="#0c0c0c" stroke-width="0.6"/>
<linearGradient id="hg9" x1="0" y1="0" x2="1" y2="0"><stop offset="0" stop-color="#1a4592"/><stop offset="0.55" stop-color="#1a4592" stop-opacity="0.8"/><stop offset="1" stop-color="#1a4592" stop-opacity="0.08"/></linearGradient>
<path d="M588.6,413.4 L588.6,406.7 Q588.6,403.7 591.6,403.7 L743.3,403.7 Q746.3,403.7 746.3,406.7 L746.3,413.4 Z" fill="#2a2a2a"/>
<path d="M588.6,413.4 L588.6,406.7 Q588.6,403.7 591.6,403.7 L743.3,403.7 Q746.3,403.7 746.3,406.7 L746.3,413.4 Z" fill="url(#hg9)"/>
<path d="M588.6,413.4 L588.6,406.7 Q588.6,403.7 591.6,403.7 L743.3,403.7 Q746.3,403.7 746.3,406.7 L746.3,413.4 Z" fill="url(#gloss)"/>
<rect x="589.6" y="404.0" width="155.7" height="0.8" fill="#fff" fill-opacity="0.18"/>
<rect x="588.6" y="412.8" width="157.7" height="0.8" fill="#000" fill-opacity="0.35"/>
<path d="M593.2,405.8 L595.8,408.5 L593.2,411.2" stroke="#e8eef8" stroke-width="0.9" fill="none"/><path d="M595.8,408.5 L599.5,408.5" stroke="#80b8ff" stroke-width="1.1" fill="none"/>
<text x="601.5" y="411.1" font-size="7" font-weight="bold" font-style="normal" text-anchor="start" fill="#000" fill-opacity="0.7" textLength="71.5" lengthAdjust="spacingAndGlyphs">Make S_NotificationDetails</text>
<text x="600.9" y="410.5" font-size="7" font-weight="bold" font-style="normal" text-anchor="start" fill="#e6e6e6" textLength="71.5" lengthAdjust="spacingAndGlyphs">Make S_NotificationDetails</text>
<circle cx="596.3" cy="424.2" r="2.3" fill="#111" stroke="#c06878" stroke-width="1.2"/>
<polygon points="598.7,422.6 600.5,424.2 598.7,425.8" fill="#c06878"/>
<text x="603.1" y="422.9" font-size="7" font-weight="normal" font-style="normal" text-anchor="start" fill="#000" fill-opacity="0.7" textLength="23.5" lengthAdjust="spacingAndGlyphs">Message</text>
<text x="602.5" y="422.3" font-size="7" font-weight="normal" font-style="normal" text-anchor="start" fill="#e6e6e6" stroke="#e6e6e6" stroke-width="0.22" textLength="23.5" lengthAdjust="spacingAndGlyphs">Message</text>
<rect x="604.1" y="423.6" width="56.7" height="8.1" rx="1" fill="none" stroke="#8a8a8a" stroke-width="0.8"/>
<text x="606.2" y="429.6" font-size="6.4" font-weight="normal" font-style="normal" text-anchor="start" fill="#e0e0e0" textLength="52.3" lengthAdjust="spacingAndGlyphs">Cannot unequip item</text>
<polygon points="662.8,426.9 666,426.9 664.4,428.8" fill="#ddd"/>
<circle cx="596.3" cy="440.9" r="2.3" fill="#111" stroke="#1a5ab8" stroke-width="1.2"/>
<polygon points="598.7,439.3 600.5,440.9 598.7,442.5" fill="#1a5ab8"/>
<text x="603.1" y="443.5" font-size="7" font-weight="normal" font-style="normal" text-anchor="start" fill="#000" fill-opacity="0.7" textLength="24.6" lengthAdjust="spacingAndGlyphs">Text Color</text>
<text x="602.5" y="442.9" font-size="7" font-weight="normal" font-style="normal" text-anchor="start" fill="#e6e6e6" stroke="#e6e6e6" stroke-width="0.22" textLength="24.6" lengthAdjust="spacingAndGlyphs">Text Color</text>
<rect x="629.5" y="437.2" width="7.6" height="7.4" fill="#f01010"/>
<circle cx="596.3" cy="456.6" r="2.3" fill="#111" stroke="#1a90e0" stroke-width="1.2"/>
<polygon points="598.7,455.0 600.5,456.6 598.7,458.2" fill="#1a90e0"/>
<text x="603.1" y="456.1" font-size="7" font-weight="normal" font-style="normal" text-anchor="start" fill="#000" fill-opacity="0.7" textLength="28.0" lengthAdjust="spacingAndGlyphs">Icon Image</text>
<text x="602.5" y="455.5" font-size="7" font-weight="normal" font-style="normal" text-anchor="start" fill="#e6e6e6" stroke="#e6e6e6" stroke-width="0.22" textLength="28.0" lengthAdjust="spacingAndGlyphs">Icon Image</text>
<rect x="605.2" y="457.4" width="43.3" height="5.2" rx="1" fill="#2a2a2a"/>
<text x="606.5" y="461.5" font-size="5" font-weight="normal" font-style="normal" text-anchor="start" fill="#9a9a9a" textLength="35.5" lengthAdjust="spacingAndGlyphs">T_WarningIcon_3</text>
<polygon points="643.5,459.2 646.5,459.2 645,461" fill="#aaa"/>
<path d="M654,460 L651.5,460 M653,458.5 L651.5,460 L653,461.5" stroke="#555" stroke-width="0.8" fill="none"/><circle cx="659" cy="459.5" r="1.8" fill="none" stroke="#555" stroke-width="0.7"/>
<circle cx="596.3" cy="472.8" r="2.3" fill="#111" stroke="#1a90e0" stroke-width="1.2"/>
<polygon points="598.7,471.2 600.5,472.8 598.7,474.4" fill="#1a90e0"/>
<text x="603.1" y="475.4" font-size="7" font-weight="normal" font-style="normal" text-anchor="start" fill="#000" fill-opacity="0.7" textLength="15.7" lengthAdjust="spacingAndGlyphs">Sound</text>
<text x="602.5" y="474.8" font-size="7" font-weight="normal" font-style="normal" text-anchor="start" fill="#e6e6e6" stroke="#e6e6e6" stroke-width="0.22" textLength="15.7" lengthAdjust="spacingAndGlyphs">Sound</text>
<rect x="621.4" y="470" width="25.1" height="5.6" rx="1" fill="#2a2a2a"/>
<text x="622.5" y="474.2" font-size="5" font-weight="normal" font-style="normal" text-anchor="start" fill="#9a9a9a" textLength="17.0" lengthAdjust="spacingAndGlyphs">SC_Click</text>
<polygon points="641.5,471.9 644.5,471.9 643,473.7" fill="#aaa"/>
<path d="M651,472.8 L648.5,472.8 M650,471.3 L648.5,472.8 L650,474.3" stroke="#555" stroke-width="0.8" fill="none"/><circle cx="656" cy="472.3" r="1.8" fill="none" stroke="#555" stroke-width="0.7"/>
<text x="680.0" y="423.1" font-size="7" font-weight="normal" font-style="normal" text-anchor="start" fill="#000" fill-opacity="0.7" textLength="52.8" lengthAdjust="spacingAndGlyphs">S Notification Details</text>
<text x="679.4" y="422.5" font-size="7" font-weight="normal" font-style="normal" text-anchor="start" fill="#e6e6e6" stroke="#e6e6e6" stroke-width="0.22" textLength="52.8" lengthAdjust="spacingAndGlyphs">S Notification Details</text>
<circle cx="737.5" cy="420.5" r="2.9" fill="#1060e0"/>
<polygon points="739.7,418.9 741.7,420.5 739.7,422.1" fill="#1060e0"/>
<rect x="356.1" y="390.5" width="82.0" height="43.8" rx="4" fill="#000" fill-opacity="0.45" filter="url(#blur1)"/>
<rect x="355.6" y="389.0" width="82.0" height="43.8" rx="3" fill="#1c1d1b" stroke="#0c0c0c" stroke-width="0.6"/>
<linearGradient id="hg10" x1="0" y1="0" x2="1" y2="0"><stop offset="0" stop-color="#1a4592"/><stop offset="0.55" stop-color="#1a4592" stop-opacity="0.8"/><stop offset="1" stop-color="#1a4592" stop-opacity="0.08"/></linearGradient>
<path d="M355.6,399.1 L355.6,392.0 Q355.6,389.0 358.6,389.0 L434.6,389.0 Q437.6,389.0 437.6,392.0 L437.6,399.1 Z" fill="#2a2a2a"/>
<path d="M355.6,399.1 L355.6,392.0 Q355.6,389.0 358.6,389.0 L434.6,389.0 Q437.6,389.0 437.6,392.0 L437.6,399.1 Z" fill="url(#hg10)"/>
<path d="M355.6,399.1 L355.6,392.0 Q355.6,389.0 358.6,389.0 L434.6,389.0 Q437.6,389.0 437.6,392.0 L437.6,399.1 Z" fill="url(#gloss)"/>
<rect x="356.6" y="389.3" width="80.0" height="0.8" fill="#fff" fill-opacity="0.18"/>
<rect x="355.6" y="398.5" width="82.0" height="0.8" fill="#000" fill-opacity="0.35"/>
<path d="M360.5,394.3 L364.5,394.3" stroke="#80b8ff" stroke-width="1.1" fill="none"/><path d="M364.5,394.3 L366.0,391.7 M364.5,394.3 L366.0,396.9" stroke="#e8eef8" stroke-width="0.9" fill="none"/>
<text x="368.7" y="396.9" font-size="7" font-weight="bold" font-style="normal" text-anchor="start" fill="#000" fill-opacity="0.7" textLength="42.8" lengthAdjust="spacingAndGlyphs">Break S_InvItem</text>
<text x="368.1" y="396.3" font-size="7" font-weight="bold" font-style="normal" text-anchor="start" fill="#e6e6e6" textLength="42.8" lengthAdjust="spacingAndGlyphs">Break S_InvItem</text>
<circle cx="362.9" cy="406.4" r="2.9" fill="#1060e0"/>
<polygon points="365.1,404.8 367.1,406.4 365.1,408.0" fill="#1060e0"/>
<text x="369.7" y="409.0" font-size="7" font-weight="normal" font-style="normal" text-anchor="start" fill="#000" fill-opacity="0.7" textLength="25.0" lengthAdjust="spacingAndGlyphs">S Inv Item</text>
<text x="369.1" y="408.4" font-size="7" font-weight="normal" font-style="normal" text-anchor="start" fill="#e6e6e6" stroke="#e6e6e6" stroke-width="0.22" textLength="25.0" lengthAdjust="spacingAndGlyphs">S Inv Item</text>
<text x="419.5" y="409.0" font-size="7" font-weight="normal" font-style="normal" text-anchor="start" fill="#000" fill-opacity="0.7" textLength="5.1" lengthAdjust="spacingAndGlyphs">ID</text>
<text x="418.9" y="408.4" font-size="7" font-weight="normal" font-style="normal" text-anchor="start" fill="#e6e6e6" stroke="#e6e6e6" stroke-width="0.22" textLength="5.1" lengthAdjust="spacingAndGlyphs">ID</text>
<circle cx="429.0" cy="406.4" r="2.9" fill="#c880f0"/>
<polygon points="431.2,404.8 433.2,406.4 431.2,408.0" fill="#c880f0"/>
<text x="404.8" y="420.5" font-size="7" font-weight="normal" font-style="normal" text-anchor="start" fill="#000" fill-opacity="0.7" textLength="19.3" lengthAdjust="spacingAndGlyphs">Amount</text>
<text x="404.2" y="419.9" font-size="7" font-weight="normal" font-style="normal" text-anchor="start" fill="#e6e6e6" stroke="#e6e6e6" stroke-width="0.22" textLength="19.3" lengthAdjust="spacingAndGlyphs">Amount</text>
<circle cx="429.0" cy="417.9" r="2.3" fill="#111" stroke="#20b090" stroke-width="1.2"/>
<polygon points="431.4,416.3 433.2,417.9 431.4,419.5" fill="#20b090"/>
<polygon points="394.2,426.7 398.8,426.7 396.5,429.6" fill="#eee"/>
<rect x="347.5" y="438.5" width="125.0" height="61.7" rx="4" fill="#000" fill-opacity="0.45" filter="url(#blur1)"/>
<rect x="347.0" y="437.0" width="125.0" height="61.7" rx="4" fill="#f0a01c"/>
<rect x="348.6" y="438.6" width="121.8" height="58.5" rx="3" fill="#1c1d1b" stroke="#0c0c0c" stroke-width="0.6"/>
<linearGradient id="hg11" x1="0" y1="0" x2="1" y2="0"><stop offset="0" stop-color="#1a4592"/><stop offset="0.55" stop-color="#1a4592" stop-opacity="0.8"/><stop offset="1" stop-color="#1a4592" stop-opacity="0.08"/></linearGradient>
<path d="M348.6,448.9 L348.6,441.6 Q348.6,438.6 351.6,438.6 L467.4,438.6 Q470.4,438.6 470.4,441.6 L470.4,448.9 Z" fill="#2a2a2a"/>
<path d="M348.6,448.9 L348.6,441.6 Q348.6,438.6 351.6,438.6 L467.4,438.6 Q470.4,438.6 470.4,441.6 L470.4,448.9 Z" fill="url(#hg11)"/>
<path d="M348.6,448.9 L348.6,441.6 Q348.6,438.6 351.6,438.6 L467.4,438.6 Q470.4,438.6 470.4,441.6 L470.4,448.9 Z" fill="url(#gloss)"/>
<rect x="349.6" y="438.9" width="119.8" height="0.8" fill="#fff" fill-opacity="0.18"/>
<rect x="348.6" y="448.3" width="121.8" height="0.8" fill="#000" fill-opacity="0.35"/>
<path d="M353.5,443.7 L357.5,443.7" stroke="#80b8ff" stroke-width="1.1" fill="none"/><path d="M357.5,443.7 L359.0,441.1 M357.5,443.7 L359.0,446.3" stroke="#e8eef8" stroke-width="0.9" fill="none"/>
<text x="361.8" y="446.3" font-size="7" font-weight="bold" font-style="normal" text-anchor="start" fill="#000" fill-opacity="0.7" textLength="61.0" lengthAdjust="spacingAndGlyphs">Break S_EquipmentSlot</text>
<text x="361.2" y="445.7" font-size="7" font-weight="bold" font-style="normal" text-anchor="start" fill="#e6e6e6" textLength="61.0" lengthAdjust="spacingAndGlyphs">Break S_EquipmentSlot</text>
<circle cx="356.1" cy="455.8" r="2.9" fill="#1060e0"/>
<polygon points="358.3,454.2 360.3,455.8 358.3,457.4" fill="#1060e0"/>
<text x="363.0" y="458.4" font-size="7" font-weight="normal" font-style="normal" text-anchor="start" fill="#000" fill-opacity="0.7" textLength="42.6" lengthAdjust="spacingAndGlyphs">S Equipment Slot</text>
<text x="362.4" y="457.8" font-size="7" font-weight="normal" font-style="normal" text-anchor="start" fill="#e6e6e6" stroke="#e6e6e6" stroke-width="0.22" textLength="42.6" lengthAdjust="spacingAndGlyphs">S Equipment Slot</text>
<text x="417.4" y="458.4" font-size="7" font-weight="normal" font-style="normal" text-anchor="start" fill="#000" fill-opacity="0.7" textLength="39.9" lengthAdjust="spacingAndGlyphs">Equipment Type</text>
<text x="416.8" y="457.8" font-size="7" font-weight="normal" font-style="normal" text-anchor="start" fill="#e6e6e6" stroke="#e6e6e6" stroke-width="0.22" textLength="39.9" lengthAdjust="spacingAndGlyphs">Equipment Type</text>
<circle cx="461.6" cy="455.8" r="2.9" fill="#108870"/>
<polygon points="463.8,454.2 465.8,455.8 463.8,457.4" fill="#108870"/>
<text x="446.5" y="470.0" font-size="7" font-weight="normal" font-style="normal" text-anchor="start" fill="#000" fill-opacity="0.7" textLength="10.8" lengthAdjust="spacingAndGlyphs">Item</text>
<text x="445.9" y="469.4" font-size="7" font-weight="normal" font-style="normal" text-anchor="start" fill="#e6e6e6" stroke="#e6e6e6" stroke-width="0.22" textLength="10.8" lengthAdjust="spacingAndGlyphs">Item</text>
<circle cx="461.6" cy="467.4" r="2.3" fill="#111" stroke="#1060e0" stroke-width="1.2"/>
<polygon points="464.0,465.8 465.8,467.4 464.0,469.0" fill="#1060e0"/>
<text x="434.5" y="481.5" font-size="7" font-weight="normal" font-style="normal" text-anchor="start" fill="#000" fill-opacity="0.7" textLength="22.8" lengthAdjust="spacingAndGlyphs">Inventory</text>
<text x="433.9" y="480.9" font-size="7" font-weight="normal" font-style="normal" text-anchor="start" fill="#e6e6e6" stroke="#e6e6e6" stroke-width="0.22" textLength="22.8" lengthAdjust="spacingAndGlyphs">Inventory</text>
<circle cx="461.6" cy="478.9" r="2.3" fill="#111" stroke="#1a90e0" stroke-width="1.2"/>
<polygon points="464.0,477.3 465.8,478.9 464.0,480.5" fill="#1a90e0"/>
<text x="416.7" y="493.1" font-size="7" font-weight="normal" font-style="normal" text-anchor="start" fill="#000" fill-opacity="0.7" textLength="40.6" lengthAdjust="spacingAndGlyphs">Equipment Actor</text>
<text x="416.1" y="492.5" font-size="7" font-weight="normal" font-style="normal" text-anchor="start" fill="#e6e6e6" stroke="#e6e6e6" stroke-width="0.22" textLength="40.6" lengthAdjust="spacingAndGlyphs">Equipment Actor</text>
<circle cx="461.6" cy="490.5" r="2.3" fill="#111" stroke="#1a90e0" stroke-width="1.2"/>
<polygon points="464.0,488.9 465.8,490.5 464.0,492.1" fill="#1a90e0"/>
</g></svg></body></html>
